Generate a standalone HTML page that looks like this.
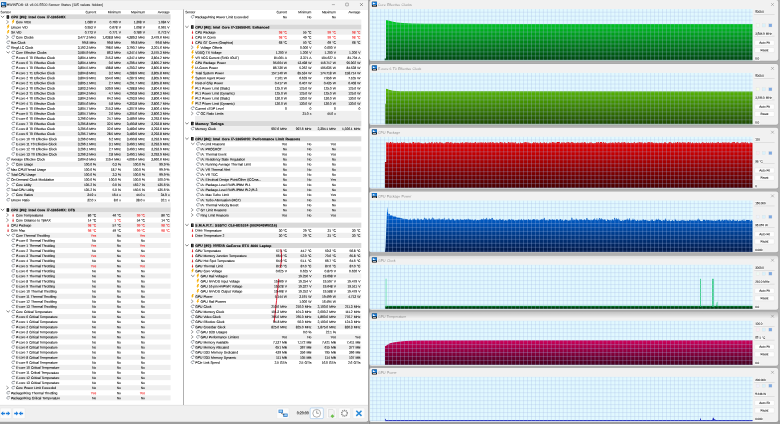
<!DOCTYPE html>
<html><head><meta charset="utf-8"><title>HWiNFO64 Sensor Status</title>
<style>html,body{margin:0;padding:0}
body{width:780px;height:424px;overflow:hidden;background:#b0b0b0;position:relative}
#bg{position:absolute;left:0;top:0}
#tx{position:absolute;left:0;top:0;width:780px;height:424px;will-change:transform;font-family:"Liberation Sans",sans-serif;font-size:3.4px;letter-spacing:-.115px;word-spacing:.3px;line-height:4px;color:#000;-webkit-text-stroke:.07px}
#tx p,#tx span,#tx b{position:absolute;margin:0;white-space:pre;height:4px;transform-origin:0 0}
#tx b{font-weight:bold;letter-spacing:.085px;-webkit-text-stroke:.13px}
#tx span{text-align:right;width:26px}
#tx .d{color:#f01414}
#tx .hd{color:#1a1a1a}
#tx .tt{font-size:3.5px;letter-spacing:0;color:#3c3c3c}
#tx .wt{font-size:3.48px;letter-spacing:0;color:#8c8c8c;-webkit-text-stroke:0}
#tx .gl{font-size:3.05px;letter-spacing:-.1px;color:#1e1e1e;background:#fcfcfc;padding:0 .3px;margin-left:-.3px}
#tx .bt{font-size:3.2px;letter-spacing:-.1px;color:#1e1e1e;width:19.6px;text-align:center}
#tx .tm{font-size:3.8px;letter-spacing:-.1px;color:#1e1e1e}
</style></head>
<body>
<svg id="bg" width="780" height="424" viewBox="0 0 780 424"><defs>
<linearGradient id="f0" gradientUnits="userSpaceOnUse" x1="0" y1="20" x2="0" y2="60.5"><stop offset="0" stop-color="#00d123"/><stop offset="1" stop-color="#00460e"/></linearGradient>
<linearGradient id="f1" gradientUnits="userSpaceOnUse" x1="0" y1="88" x2="0" y2="124.9"><stop offset="0" stop-color="#5abf00"/><stop offset="1" stop-color="#1e4700"/></linearGradient>
<linearGradient id="f2" gradientUnits="userSpaceOnUse" x1="0" y1="142" x2="0" y2="188.5"><stop offset="0" stop-color="#ed0000"/><stop offset="1" stop-color="#440000"/></linearGradient>
<linearGradient id="f3" gradientUnits="userSpaceOnUse" x1="0" y1="204" x2="0" y2="252.2"><stop offset="0" stop-color="#007aff"/><stop offset="1" stop-color="#001644"/></linearGradient>
<linearGradient id="f4" gradientUnits="userSpaceOnUse" x1="0" y1="305.8" x2="0" y2="309"><stop offset="0" stop-color="#009a46"/><stop offset=".45" stop-color="#003c08"/><stop offset="1" stop-color="#003408"/></linearGradient>
<linearGradient id="f5" gradientUnits="userSpaceOnUse" x1="0" y1="340" x2="0" y2="365.1"><stop offset="0" stop-color="#d2005a"/><stop offset="1" stop-color="#42001c"/></linearGradient>
<pattern id="gr0" x="372.2" y="59.35" width="3.97" height="3.97" patternUnits="userSpaceOnUse"><path d="M.2,0V3.97M0,.2H3.97" stroke="#a2b9e6" stroke-width=".4" fill="none"/></pattern><pattern id="gr1" x="372.2" y="123.25" width="3.97" height="3.97" patternUnits="userSpaceOnUse"><path d="M.2,0V3.97M0,.2H3.97" stroke="#a2b9e6" stroke-width=".4" fill="none"/></pattern><pattern id="gr2" x="372.2" y="187.05" width="3.97" height="3.97" patternUnits="userSpaceOnUse"><path d="M.2,0V3.97M0,.2H3.97" stroke="#a2b9e6" stroke-width=".4" fill="none"/></pattern><pattern id="gr3" x="372.2" y="250.75" width="3.97" height="3.97" patternUnits="userSpaceOnUse"><path d="M.2,0V3.97M0,.2H3.97" stroke="#a2b9e6" stroke-width=".4" fill="none"/></pattern><pattern id="gr4" x="372.2" y="307.9" width="3.97" height="3.97" patternUnits="userSpaceOnUse"><path d="M.2,0V3.97M0,.2H3.97" stroke="#a2b9e6" stroke-width=".4" fill="none"/></pattern><pattern id="gr5" x="372.2" y="363.9" width="3.97" height="3.97" patternUnits="userSpaceOnUse"><path d="M.2,0V3.97M0,.2H3.97" stroke="#a2b9e6" stroke-width=".4" fill="none"/></pattern><pattern id="gr6" x="372.2" y="420" width="3.97" height="3.97" patternUnits="userSpaceOnUse"><path d="M.2,0V3.97M0,.2H3.97" stroke="#a2b9e6" stroke-width=".4" fill="none"/></pattern>
<linearGradient id="gp" x1="0" y1="0" x2="1" y2="0"><stop offset="0" stop-color="#b4b4b4"/><stop offset=".5" stop-color="#858585"/><stop offset="1" stop-color="#8e8e8e"/></linearGradient><linearGradient id="sh" x1="0" y1="0" x2="0" y2="1"><stop offset="0" stop-color="#000" stop-opacity=".2"/><stop offset="1" stop-color="#000" stop-opacity="0"/></linearGradient><clipPath id="cp"><rect x="370" y="9" width="382.7" height="51.55"/><rect x="370" y="72.9" width="382.7" height="51.55"/><rect x="370" y="136.7" width="382.7" height="51.55"/><rect x="370" y="200.4" width="382.7" height="51.55"/><rect x="370" y="264.7" width="382.7" height="44.4"/><rect x="370" y="320.7" width="382.7" height="44.4"/><rect x="370" y="376.8" width="382.7" height="44.4"/></clipPath>
<symbol id="ib" overflow="visible"><path d="M1.35,0H2.7L1.75,1.7H2.7L.4,4.4L1.05,2.45H0Z" fill="#f6ad00"/></symbol>
<symbol id="ic" overflow="visible"><path d="M2.34,.65A1.3,1.3 0 1 0 2.68,2.2" fill="none" stroke="#56606c" stroke-width=".55"/><path d="M2.1,.2H3.05V1.15" fill="none" stroke="#2a2a2a" stroke-width=".45"/></symbol>
<symbol id="it" overflow="visible"><path d="M.8,0h.6l.35,2.3a.68,.68 0 1 1 -1.3,0z" fill="url(#tg)"/></symbol><linearGradient id="tg" x1="0" y1="0" x2="0" y2="1"><stop offset="0" stop-color="#f39a9a"/><stop offset=".6" stop-color="#e3262c"/><stop offset="1" stop-color="#dd141c"/></linearGradient>
<symbol id="ih" overflow="visible"><rect x="0" y="0" width="2.6" height="3.5" rx=".3" fill="#111"/><rect x=".9" y=".4" width=".8" height="2.7" fill="#555"/></symbol>
<symbol id="xo" overflow="visible"><path d="M0,0L1.65,1.55L3.3,0" fill="none" stroke="#383838" stroke-width=".62"/></symbol>
<symbol id="xc" overflow="visible"><path d="M0,0L2.1,1.65L0,3.3" fill="none" stroke="#5a5a5a" stroke-width=".6"/></symbol>
<symbol id="wi" overflow="visible"><rect x="0" y="0" width="5.1" height="5" rx=".4" fill="#111"/><rect x="0" y="0" width="5.1" height="3.2" rx=".4" fill="#1878d0"/><path d="M1,.8H1.7V1.3L3.9,1.9L1.7,2.5H1Z" fill="#fff"/><rect x=".9" y="3.7" width="3.3" height=".8" fill="#ddd"/></symbol>
</defs>
<rect x="0" y="420.5" width="780" height="3.5" fill="#9e9e9e"/>
<path d="M0,0.4H368.2V419.4Q368.2,421.4 366.2,421.4H0Z" fill="#fff"/>
<rect x="0" y="0.4" width="368.2" height="8.8" fill="#f2f2f2"/>
<rect x="0" y="9.05" width="368.2" height="0.4" fill="#dedede"/>
<path d="M0,405.1H368.2V419.4Q368.2,421.4 366.2,421.4H0Z" fill="#f0f0f0"/>
<rect x="0" y="404.9" width="368.2" height="0.45" fill="#d2d2d2"/>
<rect x="183.1" y="9.4" width="0.7" height="395.6" fill="#8f8f8f"/>
<rect x="10.5" y="14.36" width="160.1" height="5.08" fill="#d9d9d9"/>
<use href="#xo" x="0.9" y="15.9"/>
<use href="#ih" x="6.6" y="15.15"/>
<rect x="15.6" y="19.44" width="155" height="5.08" fill="#efefef"/>
<use href="#xc" x="6.4" y="20.33"/>
<use href="#ib" x="11.75" y="19.78"/>
<use href="#ib" x="6.75" y="24.86"/>
<rect x="10.6" y="29.6" width="160" height="5.08" fill="#efefef"/>
<use href="#ib" x="6.75" y="29.94"/>
<use href="#xc" x="6.4" y="35.57"/>
<use href="#ic" x="11.6" y="35.57"/>
<rect x="10.6" y="39.76" width="160" height="5.08" fill="#efefef"/>
<use href="#ic" x="6.6" y="40.65"/>
<use href="#ic" x="6.6" y="45.73"/>
<rect x="15.6" y="49.92" width="155" height="5.08" fill="#efefef"/>
<use href="#xo" x="6.5" y="51.56"/>
<use href="#ic" x="11.6" y="50.81"/>
<use href="#ic" x="11.6" y="55.89"/>
<rect x="15.6" y="60.08" width="155" height="5.08" fill="#efefef"/>
<use href="#ic" x="11.6" y="60.97"/>
<use href="#ic" x="11.6" y="66.05"/>
<rect x="15.6" y="70.24" width="155" height="5.08" fill="#efefef"/>
<use href="#ic" x="11.6" y="71.13"/>
<use href="#ic" x="11.6" y="76.21"/>
<rect x="15.6" y="80.4" width="155" height="5.08" fill="#efefef"/>
<use href="#ic" x="11.6" y="81.29"/>
<use href="#ic" x="11.6" y="86.37"/>
<rect x="15.6" y="90.56" width="155" height="5.08" fill="#efefef"/>
<use href="#ic" x="11.6" y="91.45"/>
<use href="#ic" x="11.6" y="96.53"/>
<rect x="15.6" y="100.72" width="155" height="5.08" fill="#efefef"/>
<use href="#ic" x="11.6" y="101.61"/>
<use href="#ic" x="11.6" y="106.69"/>
<rect x="15.6" y="110.88" width="155" height="5.08" fill="#efefef"/>
<use href="#ic" x="11.6" y="111.77"/>
<use href="#ic" x="11.6" y="116.85"/>
<rect x="15.6" y="121.04" width="155" height="5.08" fill="#efefef"/>
<use href="#ic" x="11.6" y="121.93"/>
<use href="#ic" x="11.6" y="127.01"/>
<rect x="15.6" y="131.2" width="155" height="5.08" fill="#efefef"/>
<use href="#ic" x="11.6" y="132.09"/>
<use href="#ic" x="11.6" y="137.17"/>
<rect x="15.6" y="141.36" width="155" height="5.08" fill="#efefef"/>
<use href="#ic" x="11.6" y="142.25"/>
<use href="#ic" x="11.6" y="147.33"/>
<rect x="15.6" y="151.52" width="155" height="5.08" fill="#efefef"/>
<use href="#ic" x="11.6" y="152.41"/>
<use href="#ic" x="6.6" y="157.49"/>
<rect x="15.6" y="161.68" width="155" height="5.08" fill="#efefef"/>
<use href="#xc" x="6.4" y="162.57"/>
<use href="#ic" x="11.6" y="162.57"/>
<use href="#ic" x="6.6" y="167.65"/>
<rect x="10.6" y="171.84" width="160" height="5.08" fill="#efefef"/>
<use href="#ic" x="6.6" y="172.73"/>
<use href="#ic" x="6.6" y="177.81"/>
<rect x="15.6" y="182" width="155" height="5.08" fill="#efefef"/>
<use href="#xc" x="6.4" y="182.89"/>
<use href="#ic" x="11.6" y="182.89"/>
<use href="#ic" x="6.6" y="187.97"/>
<rect x="15.6" y="192.16" width="155" height="5.08" fill="#efefef"/>
<use href="#xc" x="6.4" y="193.05"/>
<use href="#ic" x="11.6" y="193.05"/>
<use href="#ic" x="6.6" y="198.13"/>
<rect x="10.6" y="202.32" width="160" height="5.08" fill="#efefef"/>
<rect x="10.5" y="207.4" width="160.1" height="5.08" fill="#d9d9d9"/>
<use href="#xo" x="0.9" y="208.94"/>
<use href="#ih" x="6.6" y="208.19"/>
<rect x="15.6" y="212.48" width="155" height="5.08" fill="#efefef"/>
<use href="#xc" x="6.4" y="213.37"/>
<use href="#it" x="12" y="213.42"/>
<use href="#xc" x="6.4" y="218.45"/>
<use href="#it" x="12" y="218.5"/>
<rect x="10.6" y="222.64" width="160" height="5.08" fill="#efefef"/>
<use href="#it" x="7" y="223.58"/>
<use href="#it" x="7" y="228.66"/>
<rect x="15.6" y="232.8" width="155" height="5.08" fill="#efefef"/>
<use href="#xo" x="6.5" y="234.44"/>
<use href="#ic" x="11.6" y="233.69"/>
<use href="#ic" x="11.6" y="238.77"/>
<rect x="15.6" y="242.96" width="155" height="5.08" fill="#efefef"/>
<use href="#ic" x="11.6" y="243.85"/>
<use href="#ic" x="11.6" y="248.93"/>
<rect x="15.6" y="253.12" width="155" height="5.08" fill="#efefef"/>
<use href="#ic" x="11.6" y="254.01"/>
<use href="#ic" x="11.6" y="259.09"/>
<rect x="15.6" y="263.28" width="155" height="5.08" fill="#efefef"/>
<use href="#ic" x="11.6" y="264.17"/>
<use href="#ic" x="11.6" y="269.25"/>
<rect x="15.6" y="273.44" width="155" height="5.08" fill="#efefef"/>
<use href="#ic" x="11.6" y="274.33"/>
<use href="#ic" x="11.6" y="279.41"/>
<rect x="15.6" y="283.6" width="155" height="5.08" fill="#efefef"/>
<use href="#ic" x="11.6" y="284.49"/>
<use href="#ic" x="11.6" y="289.57"/>
<rect x="15.6" y="293.76" width="155" height="5.08" fill="#efefef"/>
<use href="#ic" x="11.6" y="294.65"/>
<use href="#ic" x="11.6" y="299.73"/>
<rect x="15.6" y="303.92" width="155" height="5.08" fill="#efefef"/>
<use href="#ic" x="11.6" y="304.81"/>
<use href="#xo" x="6.5" y="310.64"/>
<use href="#ic" x="11.6" y="309.89"/>
<rect x="15.6" y="314.08" width="155" height="5.08" fill="#efefef"/>
<use href="#ic" x="11.6" y="314.97"/>
<use href="#ic" x="11.6" y="320.05"/>
<rect x="15.6" y="324.24" width="155" height="5.08" fill="#efefef"/>
<use href="#ic" x="11.6" y="325.13"/>
<use href="#ic" x="11.6" y="330.21"/>
<rect x="15.6" y="334.4" width="155" height="5.08" fill="#efefef"/>
<use href="#ic" x="11.6" y="335.29"/>
<use href="#ic" x="11.6" y="340.37"/>
<rect x="15.6" y="344.56" width="155" height="5.08" fill="#efefef"/>
<use href="#ic" x="11.6" y="345.45"/>
<use href="#ic" x="11.6" y="350.53"/>
<rect x="15.6" y="354.72" width="155" height="5.08" fill="#efefef"/>
<use href="#ic" x="11.6" y="355.61"/>
<use href="#ic" x="11.6" y="360.69"/>
<rect x="15.6" y="364.88" width="155" height="5.08" fill="#efefef"/>
<use href="#ic" x="11.6" y="365.77"/>
<use href="#ic" x="11.6" y="370.85"/>
<rect x="15.6" y="375.04" width="155" height="5.08" fill="#efefef"/>
<use href="#ic" x="11.6" y="375.93"/>
<use href="#ic" x="11.6" y="381.01"/>
<rect x="15.6" y="385.2" width="155" height="5.08" fill="#efefef"/>
<use href="#xc" x="6.4" y="386.09"/>
<use href="#ic" x="11.6" y="386.09"/>
<use href="#ic" x="6.6" y="391.17"/>
<rect x="10.6" y="395.36" width="160" height="5.08" fill="#efefef"/>
<use href="#ic" x="6.6" y="396.25"/>
<use href="#ic" x="191" y="15.25"/>
<rect x="195" y="19.44" width="166.3" height="5.08" fill="#efefef"/>
<rect x="194.9" y="24.52" width="166.4" height="5.08" fill="#d9d9d9"/>
<use href="#xo" x="185.3" y="26.06"/>
<use href="#ih" x="191" y="25.31"/>
<rect x="195" y="29.6" width="166.3" height="5.08" fill="#efefef"/>
<use href="#it" x="191.4" y="30.54"/>
<use href="#it" x="191.4" y="35.62"/>
<rect x="195" y="39.76" width="166.3" height="5.08" fill="#efefef"/>
<use href="#it" x="191.4" y="40.7"/>
<use href="#xc" x="191.1" y="45.73"/>
<use href="#ib" x="196.45" y="45.18"/>
<rect x="195" y="49.92" width="166.3" height="5.08" fill="#efefef"/>
<use href="#ib" x="191.15" y="50.26"/>
<use href="#ib" x="191.15" y="55.34"/>
<rect x="195" y="60.08" width="166.3" height="5.08" fill="#efefef"/>
<use href="#ib" x="191.15" y="60.42"/>
<use href="#ib" x="191.15" y="65.5"/>
<rect x="195" y="70.24" width="166.3" height="5.08" fill="#efefef"/>
<use href="#ib" x="191.15" y="70.58"/>
<use href="#ib" x="191.15" y="75.66"/>
<rect x="195" y="80.4" width="166.3" height="5.08" fill="#efefef"/>
<use href="#ib" x="191.15" y="80.74"/>
<use href="#ib" x="191.15" y="85.82"/>
<rect x="195" y="90.56" width="166.3" height="5.08" fill="#efefef"/>
<use href="#ib" x="191.15" y="90.9"/>
<use href="#ib" x="191.15" y="95.98"/>
<rect x="195" y="100.72" width="166.3" height="5.08" fill="#efefef"/>
<use href="#ib" x="191.15" y="101.06"/>
<use href="#ic" x="191" y="106.69"/>
<rect x="200.3" y="110.88" width="161" height="5.08" fill="#efefef"/>
<use href="#xc" x="191.1" y="111.77"/>
<use href="#ic" x="196.3" y="111.77"/>
<rect x="195" y="115.96" width="166.3" height="5.08" fill="#efefef"/>
<rect x="194.9" y="121.04" width="166.4" height="5.08" fill="#d9d9d9"/>
<use href="#xo" x="185.3" y="122.58"/>
<use href="#ih" x="191" y="121.83"/>
<rect x="195" y="126.12" width="166.3" height="5.08" fill="#efefef"/>
<use href="#ic" x="191" y="127.01"/>
<rect x="194.9" y="136.28" width="166.4" height="5.08" fill="#d9d9d9"/>
<use href="#xo" x="185.3" y="137.82"/>
<use href="#ih" x="191" y="137.07"/>
<use href="#xo" x="191.2" y="143"/>
<use href="#ic" x="196.3" y="142.25"/>
<rect x="200.3" y="146.44" width="161" height="5.08" fill="#efefef"/>
<use href="#ic" x="196.3" y="147.33"/>
<use href="#ic" x="196.3" y="152.41"/>
<rect x="200.3" y="156.6" width="161" height="5.08" fill="#efefef"/>
<use href="#ic" x="196.3" y="157.49"/>
<use href="#ic" x="196.3" y="162.57"/>
<rect x="200.3" y="166.76" width="161" height="5.08" fill="#efefef"/>
<use href="#ic" x="196.3" y="167.65"/>
<use href="#ic" x="196.3" y="172.73"/>
<rect x="200.3" y="176.92" width="161" height="5.08" fill="#efefef"/>
<use href="#ic" x="196.3" y="177.81"/>
<use href="#ic" x="196.3" y="182.89"/>
<rect x="200.3" y="187.08" width="161" height="5.08" fill="#efefef"/>
<use href="#ic" x="196.3" y="187.97"/>
<use href="#ic" x="196.3" y="193.05"/>
<rect x="200.3" y="197.24" width="161" height="5.08" fill="#efefef"/>
<use href="#ic" x="196.3" y="198.13"/>
<use href="#ic" x="196.3" y="203.21"/>
<rect x="200.3" y="207.4" width="161" height="5.08" fill="#efefef"/>
<use href="#xc" x="191.1" y="208.29"/>
<use href="#ic" x="196.3" y="208.29"/>
<rect x="200.3" y="212.48" width="161" height="5.08" fill="#efefef"/>
<use href="#xc" x="191.1" y="213.37"/>
<use href="#ic" x="196.3" y="213.37"/>
<rect x="194.9" y="222.64" width="166.4" height="5.08" fill="#d9d9d9"/>
<use href="#xo" x="185.3" y="224.18"/>
<use href="#ih" x="191" y="223.43"/>
<use href="#it" x="191.4" y="228.66"/>
<rect x="195" y="232.8" width="166.3" height="5.08" fill="#efefef"/>
<use href="#it" x="191.4" y="233.74"/>
<rect x="194.9" y="242.96" width="166.4" height="5.08" fill="#d9d9d9"/>
<use href="#xo" x="185.3" y="244.5"/>
<use href="#ih" x="191" y="243.75"/>
<use href="#it" x="191.4" y="248.98"/>
<rect x="195" y="253.12" width="166.3" height="5.08" fill="#efefef"/>
<use href="#it" x="191.4" y="254.06"/>
<use href="#it" x="191.4" y="259.14"/>
<rect x="195" y="263.28" width="166.3" height="5.08" fill="#efefef"/>
<use href="#it" x="191.4" y="264.22"/>
<use href="#ib" x="191.15" y="268.7"/>
<rect x="200.3" y="273.44" width="161" height="5.08" fill="#efefef"/>
<use href="#xo" x="191.2" y="275.08"/>
<use href="#ib" x="196.45" y="273.78"/>
<use href="#ib" x="196.45" y="278.86"/>
<rect x="200.3" y="283.6" width="161" height="5.08" fill="#efefef"/>
<use href="#ib" x="196.45" y="283.94"/>
<use href="#ib" x="196.45" y="289.02"/>
<rect x="195" y="293.76" width="166.3" height="5.08" fill="#efefef"/>
<use href="#ib" x="191.15" y="294.1"/>
<use href="#xc" x="191.1" y="299.73"/>
<use href="#ib" x="196.45" y="299.18"/>
<rect x="195" y="303.92" width="166.3" height="5.08" fill="#efefef"/>
<use href="#ic" x="191" y="304.81"/>
<use href="#ic" x="191" y="309.89"/>
<rect x="195" y="314.08" width="166.3" height="5.08" fill="#efefef"/>
<use href="#ic" x="191" y="314.97"/>
<use href="#ic" x="191" y="320.05"/>
<rect x="195" y="324.24" width="166.3" height="5.08" fill="#efefef"/>
<use href="#ic" x="191" y="325.13"/>
<use href="#xc" x="191.1" y="330.21"/>
<use href="#ic" x="196.3" y="330.21"/>
<rect x="200.3" y="334.4" width="161" height="5.08" fill="#efefef"/>
<use href="#xc" x="191.1" y="335.29"/>
<use href="#ic" x="196.3" y="335.29"/>
<use href="#ic" x="191" y="340.37"/>
<rect x="195" y="344.56" width="166.3" height="5.08" fill="#efefef"/>
<use href="#ic" x="191" y="345.45"/>
<use href="#ic" x="191" y="350.53"/>
<rect x="195" y="354.72" width="166.3" height="5.08" fill="#efefef"/>
<use href="#ic" x="191" y="355.61"/>
<use href="#ic" x="191" y="360.69"/>
<use href="#wi" x="1.1" y="2.2"/>
<path d="M331.9,4.6h3" stroke="#555" stroke-width=".4"/>
<rect x="345.6" y="3.1" width="2.8" height="2.8" rx=".4" fill="none" stroke="#555" stroke-width=".4"/>
<path d="M360,3.1l2.9,2.9m0,-2.9l-2.9,2.9" stroke="#333" stroke-width=".42"/>
<rect x="0.2" y="408" width="11.1" height="10.6" rx="1" fill="#fbfbfb" stroke="#e2e2e2" stroke-width=".35"/>
<rect x="12.8" y="408" width="12.2" height="10.6" rx="1" fill="#fbfbfb" stroke="#e2e2e2" stroke-width=".35"/>
<rect x="276.8" y="408" width="12.2" height="10.6" rx="1" fill="#fbfbfb" stroke="#e2e2e2" stroke-width=".35"/>
<rect x="310.2" y="408" width="13.1" height="10.6" rx="1" fill="#fff" stroke="#5b9fe4" stroke-width=".35"/>
<rect x="326.4" y="408" width="9.9" height="10.6" rx="1" fill="#fbfbfb" stroke="#e2e2e2" stroke-width=".35"/>
<rect x="338.7" y="408" width="11.7" height="10.6" rx="1" fill="#fbfbfb" stroke="#e2e2e2" stroke-width=".35"/>
<rect x="352.9" y="408" width="11.9" height="10.6" rx="1" fill="#fbfbfb" stroke="#e2e2e2" stroke-width=".35"/>
<path d="M5.1,412.65h-1.9v-1.4l-2.4,2.15l2.4,2.15v-1.4h1.9z" fill="#1f7edb"/>
<path d="M5.9,412.65h1.9v-1.4l2.4,2.15l-2.4,2.15v-1.4h-1.9z" fill="#1f7edb"/>
<path d="M14.2,412.65h1.9v-1.4l2.4,2.15l-2.4,2.15v-1.4h-1.9z" fill="#1f7edb"/>
<path d="M23.1,412.65h-1.9v-1.4l-2.4,2.15l2.4,2.15v-1.4h1.9z" fill="#1f7edb"/>
<path d="M278.6,409.7h4.4v3.2h-4.4z" fill="#2a78c8"/><path d="M283.2,413.6h4.4v3.2h-4.4z" fill="#2a78c8"/><path d="M279.3,410.3h3v1.9h-3zM283.9,414.2h3v1.9h-3z" fill="#9fd0f5"/><path d="M281,413.2l3.6,1.6" stroke="#1b1b1b" stroke-width=".5"/>
<circle cx="316.7" cy="413.3" r="3.9" fill="#fff" stroke="#555" stroke-width=".45"/><path d="M316.7,410.6v2.7h2.1" stroke="#333" stroke-width=".45" fill="none"/>
<path d="M328.6,409.4h4.2l1.4,1.4v6.3h-5.6z" fill="#f4f4f4" stroke="#b5b5b5" stroke-width=".35"/><path d="M332.4,414.3l1.9,1.9l-1.9,1.9l-1.9,-1.9z" fill="#6cc04a"/>
<circle cx="344.5" cy="413.3" r="2.9" fill="none" stroke="#8a8a8a" stroke-width="1.3" stroke-dasharray="1.1 .72"/><circle cx="344.5" cy="413.3" r="2.3" fill="#fff" stroke="#8a8a8a" stroke-width=".5"/>
<path d="M356.3,410.7l5.2,5.2m0,-5.2l-5.2,5.2" stroke="#2a8ad8" stroke-width="1.5" stroke-linecap="butt"/>
<rect x="368.2" y="0" width="1.7" height="424" fill="url(#gp)"/>
<rect x="368.9" y="-0.3" width="409.8" height="61.9" rx="2.4" fill="#9a9a9a" opacity=".55"/>
<rect x="369.4" y="0.1" width="408.8" height="60.7" rx="2" fill="#f1f1f1"/>
<rect x="370" y="9" width="382.7" height="51.55" fill="#e1f8fe"/>
<use href="#wi" x="371.9" y="1.7"/>
<path d="M771.1,3.1l2.8,2.8m0,-2.8l-2.8,2.8" stroke="#777" stroke-width=".42"/>
<rect x="754.2" y="14.4" width="20.4" height="0.35" fill="#bcbcbc"/>
<rect x="756.1" y="23.8" width="3.2" height="3.2" fill="#f3fbf1" stroke="#dadada" stroke-width=".25"/>
<rect x="762.2" y="23.8" width="3.2" height="3.2" fill="#d9f1fb" stroke="#dadada" stroke-width=".25"/>
<rect x="768.8" y="23.8" width="3.2" height="3.2" fill="#7ea9e2" stroke="#dadada" stroke-width=".25"/>
<rect x="754.2" y="35.9" width="20.4" height="0.35" fill="#bcbcbc"/>
<rect x="754.7" y="40.3" width="19.6" height="5" rx=".8" fill="#fdfdfd" stroke="#d8d8d8" stroke-width=".35"/>
<rect x="754.7" y="47.6" width="19.6" height="5" rx=".8" fill="#fdfdfd" stroke="#d8d8d8" stroke-width=".35"/>
<rect x="368.9" y="63.6" width="409.8" height="61.9" rx="2.4" fill="#9a9a9a" opacity=".55"/>
<rect x="369.4" y="64" width="408.8" height="60.7" rx="2" fill="#f1f1f1"/>
<rect x="370" y="72.9" width="382.7" height="51.55" fill="#e1f8fe"/>
<use href="#wi" x="371.9" y="65.6"/>
<path d="M771.1,67l2.8,2.8m0,-2.8l-2.8,2.8" stroke="#777" stroke-width=".42"/>
<rect x="754.2" y="78.3" width="20.4" height="0.35" fill="#bcbcbc"/>
<rect x="756.1" y="87.7" width="3.2" height="3.2" fill="#f7fbe6" stroke="#dadada" stroke-width=".25"/>
<rect x="762.2" y="87.7" width="3.2" height="3.2" fill="#d9f1fb" stroke="#dadada" stroke-width=".25"/>
<rect x="768.8" y="87.7" width="3.2" height="3.2" fill="#7ea9e2" stroke="#dadada" stroke-width=".25"/>
<rect x="754.2" y="99.8" width="20.4" height="0.35" fill="#bcbcbc"/>
<rect x="754.7" y="104.2" width="19.6" height="5" rx=".8" fill="#fdfdfd" stroke="#d8d8d8" stroke-width=".35"/>
<rect x="754.7" y="111.5" width="19.6" height="5" rx=".8" fill="#fdfdfd" stroke="#d8d8d8" stroke-width=".35"/>
<rect x="368.9" y="127.4" width="409.8" height="61.9" rx="2.4" fill="#9a9a9a" opacity=".55"/>
<rect x="369.4" y="127.8" width="408.8" height="60.7" rx="2" fill="#f1f1f1"/>
<rect x="370" y="136.7" width="382.7" height="51.55" fill="#e1f8fe"/>
<use href="#wi" x="371.9" y="129.4"/>
<path d="M771.1,130.8l2.8,2.8m0,-2.8l-2.8,2.8" stroke="#777" stroke-width=".42"/>
<rect x="754.2" y="142.1" width="20.4" height="0.35" fill="#bcbcbc"/>
<rect x="756.1" y="151.5" width="3.2" height="3.2" fill="#fbe9ee" stroke="#dadada" stroke-width=".25"/>
<rect x="762.2" y="151.5" width="3.2" height="3.2" fill="#d9f1fb" stroke="#dadada" stroke-width=".25"/>
<rect x="768.8" y="151.5" width="3.2" height="3.2" fill="#7ea9e2" stroke="#dadada" stroke-width=".25"/>
<rect x="754.2" y="163.6" width="20.4" height="0.35" fill="#bcbcbc"/>
<rect x="754.7" y="168" width="19.6" height="5" rx=".8" fill="#fdfdfd" stroke="#d8d8d8" stroke-width=".35"/>
<rect x="754.7" y="175.3" width="19.6" height="5" rx=".8" fill="#fdfdfd" stroke="#d8d8d8" stroke-width=".35"/>
<rect x="368.9" y="191.1" width="409.8" height="61.9" rx="2.4" fill="#9a9a9a" opacity=".55"/>
<rect x="369.4" y="191.5" width="408.8" height="60.7" rx="2" fill="#f1f1f1"/>
<rect x="370" y="200.4" width="382.7" height="51.55" fill="#e1f8fe"/>
<use href="#wi" x="371.9" y="193.1"/>
<path d="M771.1,194.5l2.8,2.8m0,-2.8l-2.8,2.8" stroke="#777" stroke-width=".42"/>
<rect x="754.2" y="205.8" width="20.4" height="0.35" fill="#bcbcbc"/>
<rect x="756.1" y="215.2" width="3.2" height="3.2" fill="#eef3fb" stroke="#dadada" stroke-width=".25"/>
<rect x="762.2" y="215.2" width="3.2" height="3.2" fill="#d9f1fb" stroke="#dadada" stroke-width=".25"/>
<rect x="768.8" y="215.2" width="3.2" height="3.2" fill="#7ea9e2" stroke="#dadada" stroke-width=".25"/>
<rect x="754.2" y="227.3" width="20.4" height="0.35" fill="#bcbcbc"/>
<rect x="754.7" y="231.7" width="19.6" height="5" rx=".8" fill="#fdfdfd" stroke="#d8d8d8" stroke-width=".35"/>
<rect x="754.7" y="239" width="19.6" height="5" rx=".8" fill="#fdfdfd" stroke="#d8d8d8" stroke-width=".35"/>
<rect x="368.9" y="255.4" width="409.8" height="55.2" rx="2.4" fill="#9a9a9a" opacity=".55"/>
<rect x="369.4" y="255.8" width="408.8" height="54" rx="2" fill="#f1f1f1"/>
<rect x="369.4" y="255.8" width="408.8" height="4" rx="2" fill="url(#sh)" opacity=".45"/>
<rect x="370" y="264.7" width="382.7" height="44.4" fill="#e1f8fe"/>
<use href="#wi" x="371.9" y="257.4"/>
<path d="M771.1,258.8l2.8,2.8m0,-2.8l-2.8,2.8" stroke="#777" stroke-width=".42"/>
<rect x="754.2" y="270.4" width="20.4" height="0.35" fill="#bcbcbc"/>
<rect x="756.1" y="272" width="3.2" height="3.2" fill="#effaf4" stroke="#dadada" stroke-width=".25"/>
<rect x="762.2" y="272" width="3.2" height="3.2" fill="#d9f1fb" stroke="#dadada" stroke-width=".25"/>
<rect x="768.8" y="272" width="3.2" height="3.2" fill="#7ea9e2" stroke="#dadada" stroke-width=".25"/>
<rect x="754.2" y="283.9" width="20.4" height="0.35" fill="#bcbcbc"/>
<rect x="754.7" y="288.3" width="19.6" height="5" rx=".8" fill="#fdfdfd" stroke="#d8d8d8" stroke-width=".35"/>
<rect x="754.7" y="295.8" width="19.6" height="5" rx=".8" fill="#fdfdfd" stroke="#d8d8d8" stroke-width=".35"/>
<rect x="368.9" y="311.4" width="409.8" height="55.2" rx="2.4" fill="#9a9a9a" opacity=".55"/>
<rect x="369.4" y="311.8" width="408.8" height="54" rx="2" fill="#f1f1f1"/>
<rect x="369.4" y="311.8" width="408.8" height="6.5" rx="2" fill="url(#sh)"/>
<rect x="370" y="320.7" width="382.7" height="44.4" fill="#e1f8fe"/>
<use href="#wi" x="371.9" y="313.4"/>
<path d="M771.1,314.8l2.8,2.8m0,-2.8l-2.8,2.8" stroke="#777" stroke-width=".42"/>
<rect x="754.2" y="326.4" width="20.4" height="0.35" fill="#bcbcbc"/>
<rect x="756.1" y="328" width="3.2" height="3.2" fill="#fbeaf2" stroke="#dadada" stroke-width=".25"/>
<rect x="762.2" y="328" width="3.2" height="3.2" fill="#d9f1fb" stroke="#dadada" stroke-width=".25"/>
<rect x="768.8" y="328" width="3.2" height="3.2" fill="#7ea9e2" stroke="#dadada" stroke-width=".25"/>
<rect x="754.2" y="339.9" width="20.4" height="0.35" fill="#bcbcbc"/>
<rect x="754.7" y="344.3" width="19.6" height="5" rx=".8" fill="#fdfdfd" stroke="#d8d8d8" stroke-width=".35"/>
<rect x="754.7" y="351.8" width="19.6" height="5" rx=".8" fill="#fdfdfd" stroke="#d8d8d8" stroke-width=".35"/>
<rect x="368.9" y="367.5" width="409.8" height="55.2" rx="2.4" fill="#9a9a9a" opacity=".55"/>
<rect x="369.4" y="367.9" width="408.8" height="54" rx="2" fill="#f1f1f1"/>
<rect x="370" y="376.8" width="382.7" height="44.4" fill="#e1f8fe"/>
<use href="#wi" x="371.9" y="369.5"/>
<path d="M771.1,370.9l2.8,2.8m0,-2.8l-2.8,2.8" stroke="#777" stroke-width=".42"/>
<rect x="754.2" y="382.5" width="20.4" height="0.35" fill="#bcbcbc"/>
<rect x="756.1" y="384.1" width="3.2" height="3.2" fill="#f0f0fb" stroke="#dadada" stroke-width=".25"/>
<rect x="762.2" y="384.1" width="3.2" height="3.2" fill="#d9f1fb" stroke="#dadada" stroke-width=".25"/>
<rect x="768.8" y="384.1" width="3.2" height="3.2" fill="#7ea9e2" stroke="#dadada" stroke-width=".25"/>
<rect x="754.2" y="396" width="20.4" height="0.35" fill="#bcbcbc"/>
<rect x="754.7" y="400.4" width="19.6" height="5" rx=".8" fill="#fdfdfd" stroke="#d8d8d8" stroke-width=".35"/>
<rect x="754.7" y="407.9" width="19.6" height="5" rx=".8" fill="#fdfdfd" stroke="#d8d8d8" stroke-width=".35"/>
<g clip-path="url(#cp)">
<path d="M384.6,60.55L384.6,58.6L386,58.6L386,20.2L386.8,19.9L388.5,20.6L392,21.6L397,22.4L403,23L412,23.5L425,23.8L752.7,24.1L752.7,60.55Z" fill="url(#f0)"/>
<path d="M385.3,124.45L385.3,103.7L386,103.7L386,89L386.8,88.8L389,89.8L393,90.7L400,91.3L752.7,91.4L752.7,124.45Z" fill="url(#f1)"/>
<path d="M384.9,188.25L384.9,162L386.2,162L386.2,142.8L386.8,142.28L387.5,142.77L388.2,142.49L388.9,142.87L389.6,142.9L390.3,142L391,141.92L391.7,143.24L392.4,142.31L393.1,142.27L393.8,143.49L394.5,142.65L395.2,143.24L395.9,142.66L396.6,142.92L397.3,142.14L398,142.92L398.7,143.29L399.4,142.74L400.1,143.09L400.8,142.97L401.5,142L402.2,143.11L402.9,142.85L403.6,142.38L404.3,141.95L405,143.28L405.7,142.66L406.4,143.05L407.1,143.31L407.8,143.04L408.5,143.37L409.2,142.53L409.9,143.18L410.6,142.61L411.3,143.4L412,143.31L412.7,142.06L413.4,142.12L414.1,142.25L414.8,143.44L415.5,142.6L416.2,142.9L416.9,142.38L417.6,142.71L418.3,142.52L419,142.46L419.7,142.84L420.4,142.83L421.1,143.35L421.8,142.99L422.5,143.39L423.2,143.27L423.9,143.49L424.6,142.97L425.3,142.16L426,143.28L426.7,143.44L427.4,143.35L428.1,142.81L428.8,143.04L429.5,142.24L430.2,143.23L430.9,142.82L431.6,142.36L432.3,142L433,143.27L433.7,143.48L434.4,142.04L435.1,143.18L435.8,142.56L436.5,142.14L437.2,142.37L437.9,143.13L438.6,143.3L439.3,141.97L440,142.88L440.7,141.97L441.4,143.05L442.1,142.43L442.8,143.31L443.5,143.47L444.2,142.71L444.9,143.5L445.6,142.4L446.3,142.02L447,142.86L447.7,141.95L448.4,142.22L449.1,142.55L449.8,142.88L450.5,142.15L451.2,141.97L451.9,143.29L452.6,142.4L453.3,143.43L454,143.33L454.7,142.5L455.4,142.64L456.1,142.73L456.8,142.93L457.5,142.85L458.2,142.79L458.9,142.89L459.6,143.4L460.3,142.71L461,142.59L461.7,143.05L462.4,142.28L463.1,142.38L463.8,143.46L464.5,142.73L465.2,142.78L465.9,141.92L466.6,142.56L467.3,142.83L468,141.93L468.7,142.89L469.4,142.91L470.1,142L470.8,142.9L471.5,142.65L472.2,142.99L472.9,142.46L473.6,143.03L474.3,143.08L475,141.94L475.7,142L476.4,142.98L477.1,143.44L477.8,142.3L478.5,142.63L479.2,142.85L479.9,142.41L480.6,142.48L481.3,142.4L482,142.49L482.7,142.85L483.4,142.38L484.1,142.5L484.8,143.14L485.5,141.94L486.2,142.81L486.9,143.08L487.6,142.4L488.3,142.26L489,143.19L489.7,142.28L490.4,142.2L491.1,142.6L491.8,143.02L492.5,142.06L493.2,142.42L493.9,142.43L494.6,143.23L495.3,142.6L496,143.27L496.7,142.17L497.4,142.44L498.1,142.94L498.8,143.32L499.5,142.62L500.2,142.26L500.9,142.09L501.6,142.75L502.3,142.21L503,143.19L503.7,143.24L504.4,142.19L505.1,142.35L505.8,143.19L506.5,142.93L507.2,143.19L507.9,142.45L508.6,142.11L509.3,142.37L510,143.17L510.7,142.33L511.4,142.45L512.1,142.57L512.8,142.57L513.5,142.56L514.2,143.37L514.9,142.15L515.6,141.91L516.3,143.41L517,143.31L517.7,143.48L518.4,142.59L519.1,143.42L519.8,143.38L520.5,142.26L521.2,143.09L521.9,143.24L522.6,142.96L523.3,142.73L524,142.36L524.7,142.45L525.4,142.26L526.1,142.01L526.8,142.84L527.5,142.36L528.2,143.2L528.9,141.97L529.6,143.35L530.3,143.01L531,143.38L531.7,143.33L532.4,143.34L533.1,142.82L533.8,141.92L534.5,143.09L535.2,142.17L535.9,142.38L536.6,142.96L537.3,142.74L538,142.56L538.7,143.4L539.4,142.88L540.1,142.45L540.8,142.3L541.5,143.28L542.2,142.66L542.9,143.15L543.6,142.46L544.3,142.22L545,142.76L545.7,143.21L546.4,142.17L547.1,143.17L547.8,143.37L548.5,143.19L549.2,143.22L549.9,141.91L550.6,142.91L551.3,143.28L552,141.98L552.7,142.33L553.4,142.33L554.1,142.74L554.8,142.58L555.5,142.66L556.2,143.14L556.9,141.9L557.6,141.99L558.3,142.1L559,142.1L559.7,142.01L560.4,143.46L561.1,143.27L561.8,142.04L562.5,142.7L563.2,142.41L563.9,142.4L564.6,142.46L565.3,142.94L566,142.84L566.7,142.48L567.4,142.21L568.1,142.43L568.8,142.1L569.5,142.79L570.2,143.05L570.9,142.51L571.6,142.03L572.3,142.19L573,142.5L573.7,142.87L574.4,143.15L575.1,142.51L575.8,143.18L576.5,142.9L577.2,142.59L577.9,142.5L578.6,142.69L579.3,143.02L580,142.57L580.7,143.01L581.4,142.64L582.1,142.29L582.8,142.76L583.5,143.01L584.2,142.01L584.9,142.58L585.6,142.58L586.3,143.31L587,143.4L587.7,142.5L588.4,143.34L589.1,143.17L589.8,142.32L590.5,142.64L591.2,142.1L591.9,143.2L592.6,142.96L593.3,143.32L594,143.17L594.7,142.97L595.4,143.07L596.1,142.8L596.8,142.07L597.5,142.84L598.2,141.91L598.9,142.13L599.6,143.14L600.3,141.97L601,142.05L601.7,142.06L602.4,143.31L603.1,142.19L603.8,141.94L604.5,143.25L605.2,142.09L605.9,143.25L606.6,142.98L607.3,143.24L608,143.42L608.7,142.83L609.4,143.18L610.1,141.96L610.8,143.13L611.5,142.72L612.2,143.04L612.9,142.07L613.6,143.1L614.3,143.4L615,142L615.7,142.42L616.4,142.8L617.1,143.22L617.8,142.29L618.5,142.19L619.2,142.3L619.9,142.89L620.6,143.11L621.3,142.53L622,142.49L622.7,142.53L623.4,142.46L624.1,142.57L624.8,142.03L625.5,142.7L626.2,143.46L626.9,142.56L627.6,143.1L628.3,142.16L629,143.01L629.7,143.11L630.4,142.98L631.1,142.73L631.8,142.67L632.5,142.93L633.2,143.34L633.9,142.14L634.6,142.05L635.3,143.1L636,143.37L636.7,142.73L637.4,142.61L638.1,143.05L638.8,142.2L639.5,142.33L640.2,142.22L640.9,142.84L641.6,142.4L642.3,142.27L643,143.01L643.7,143.43L644.4,142.37L645.1,143.03L645.8,142.56L646.5,143.27L647.2,142.84L647.9,142.33L648.6,142.25L649.3,141.94L650,142.67L650.7,142.51L651.4,142.18L652.1,142.48L652.8,142.42L653.5,143.14L654.2,142.13L654.9,143.49L655.6,142.67L656.3,142.86L657,142.65L657.7,143.24L658.4,143.21L659.1,142.79L659.8,142.67L660.5,143.05L661.2,143.27L661.9,142.54L662.6,143.07L663.3,143.44L664,142.65L664.7,142.27L665.4,142.28L666.1,143.05L666.8,142.98L667.5,143.43L668.2,143.27L668.9,142.29L669.6,142.2L670.3,142.31L671,142.2L671.7,143.03L672.4,143.27L673.1,143.34L673.8,142.31L674.5,143.28L675.2,142.4L675.9,142.58L676.6,143.07L677.3,142.04L678,142.05L678.7,143.23L679.4,142.37L680.1,142.47L680.8,142.83L681.5,142.98L682.2,141.91L682.9,142.44L683.6,142.6L684.3,142.68L685,142.24L685.7,142.84L686.4,143.43L687.1,142.53L687.8,142.77L688.5,142.09L689.2,142.34L689.9,142.96L690.6,142.08L691.3,143.32L692,143.35L692.7,142.06L693.4,143.41L694.1,142.5L694.8,143.14L695.5,143.11L696.2,142.37L696.9,142.98L697.6,142.95L698.3,143.19L699,142.32L699.7,143.11L700.4,143.44L701.1,142.98L701.8,142.76L702.5,142.08L703.2,142.69L703.9,142.46L704.6,143.05L705.3,142.99L706,142.81L706.7,142.19L707.4,142.93L708.1,142.91L708.8,142.19L709.5,143.32L710.2,142.95L710.9,142.1L711.6,143.39L712.3,142.13L713,142.43L713.7,143.05L714.4,142.86L715.1,142.79L715.8,142.94L716.5,142.63L717.2,142.4L717.9,142.18L718.6,142.01L719.3,143.05L720,143.11L720.7,142.77L721.4,143.08L722.1,142.47L722.8,142.33L723.5,142.51L724.2,143.3L724.9,141.97L725.6,142.71L726.3,142.3L727,143.13L727.7,142.47L728.4,142.43L729.1,142.55L729.8,142.77L730.5,143.13L731.2,142.46L731.9,143.26L732.6,142.08L733.3,142.33L734,142.06L734.7,142.08L735.4,143.15L736.1,143.06L736.8,142.2L737.5,142.2L738.2,142.57L738.9,143.09L739.6,143.21L740.3,143.1L741,142.85L741.7,142.13L742.4,142.54L743.1,142.21L743.8,142.74L744.5,142.81L745.2,142.22L745.9,142.3L746.6,143.15L747.3,141.95L748,143.19L748.7,143.33L749.4,143.42L750.1,142.51L750.8,142.78L751.5,142.83L752.2,142.91L752.7,142.7L752.7,188.25Z" fill="url(#f2)"/>
<path d="M385,251.95L385.6,246L386.4,225L387.2,206.6L387.8,212L388.6,214.5L389.4,213.6L390.4,215.6L392,215.2L393.5,216.6L395.5,216.4L397,217.6L400,217.8L403,218.8L407,219L408,219.55L408.75,219.89L409.5,219.79L410.25,218.37L411,220.2L411.75,220.12L412.5,219.26L413.25,219.41L414,218.35L414.75,218.88L415.5,219.86L416.25,219.93L417,219.57L417.75,218.34L418.5,218.76L419.25,220.31L420,218.92L420.75,219.43L421.5,218.76L422.25,219.74L423,220.14L423.75,219.08L424.5,217.15L425.25,218.97L426,218.37L426.75,219.05L427.5,220.01L428.25,219.01L429,218.29L429.75,218.83L430.5,219.88L431.25,218.42L432,219.12L432.75,216.91L433.5,218.76L434.25,218.79L435,220.26L435.75,219.09L436.5,219.46L437.25,218.63L438,220.01L438.75,218.49L439.5,218.6L440.25,219.64L441,219.1L441.75,219.52L442.5,219.06L443.25,218.59L444,219.81L444.75,217.26L445.5,220.41L446.25,219.26L447,219.64L447.75,219.36L448.5,218.56L449.25,218.52L450,220.14L450.75,219.92L451.5,219.72L452.25,218.68L453,218.77L453.75,219.06L454.5,220.47L455.25,220.43L456,219.46L456.75,219.44L457.5,219.29L458.25,219.24L459,220.41L459.75,219.49L460.5,218.68L461.25,220.06L462,219.23L462.75,220.06L463.5,219.84L464.25,219.24L465,219.08L465.75,220.06L466.5,219.11L467.25,219.82L468,218.55L468.75,219.03L469.5,219.46L470.25,219.83L471,219.23L471.75,220.02L472.5,219.24L473.25,220.29L474,220.5L474.75,219.59L475.5,218.89L476.25,220.43L477,219.94L477.75,220.02L478.5,220.13L479.25,219.9L480,219.82L480.75,219.85L481.5,218.63L482.25,219.46L483,219.02L483.75,218.35L484.5,219.53L485.25,218.7L486,219.23L486.75,217.48L487.5,219.53L488.25,219.83L489,219.08L489.75,218.61L490.5,219.17L491.25,218.84L492,217.86L492.75,218.35L493.5,219.71L494.25,219.79L495,220.27L495.75,220.26L496.5,219.37L497.25,219.83L498,220.55L498.75,219.86L499.5,218.93L500.25,218.86L501,219.88L501.75,219.91L502.5,219.41L503.25,219.11L504,220.61L504.75,220.59L505.5,219.86L506.25,220.63L507,219.5L507.75,220.64L508.5,219.25L509.25,218.93L510,219.57L510.75,220.25L511.5,218.72L512.25,219.24L513,220.26L513.75,219.23L514.5,220.68L515.25,219.92L516,220L516.75,220.2L517.5,220.23L518.25,219.78L519,219.31L519.75,219.65L520.5,220.21L521.25,218.8L522,219.64L522.75,220.51L523.5,218.76L524.25,219.59L525,220.16L525.75,219.71L526.5,219.52L527.25,220.45L528,219.35L528.75,218.89L529.5,220.15L530.25,219.33L531,220.59L531.75,219.72L532.5,219.76L533.25,219.08L534,218.9L534.75,219.24L535.5,220.36L536.25,218.83L537,220.74L537.75,218.69L538.5,220.48L539.25,220.09L540,220.22L540.75,219.39L541.5,219.1L542.25,219.63L543,218.55L543.75,219.03L544.5,217.46L545.25,219.97L546,220.58L546.75,219.69L547.5,220.03L548.25,220.71L549,218.94L549.75,219.14L550.5,219.85L551.25,219.95L552,219.37L552.75,219.35L553.5,219.88L554.25,219.32L555,220.33L555.75,220.28L556.5,219.03L557.25,219.05L558,220.05L558.75,220.62L559.5,219.52L560.25,218.93L561,218.98L561.75,220.78L562.5,219.33L563.25,220.83L564,220.53L564.75,220.14L565.5,219.36L566.25,220.12L567,219.67L567.75,220.56L568.5,220.51L569.25,220.61L570,220.1L570.75,220.39L571.5,217.61L572.25,217.82L573,220.7L573.75,218.95L574.5,219.87L575.25,220.17L576,218.36L576.75,219.25L577.5,219.69L578.25,220.7L579,219.45L579.75,219.27L580.5,219.42L581.25,219.02L582,219.69L582.75,220.33L583.5,219.91L584.25,219.2L585,219.55L585.75,220.43L586.5,217.88L587.25,217.94L588,219.78L588.75,219.71L589.5,219.92L590.25,220.45L591,219.32L591.75,220.34L592.5,220.29L593.25,219.45L594,219.12L594.75,218.32L595.5,220.1L596.25,220.05L597,217.7L597.75,220.81L598.5,219.39L599.25,218.01L600,218.32L600.75,219.54L601.5,218.14L602.25,219.11L603,219.39L603.75,219.84L604.5,219.21L605.25,219.26L606,220.89L606.75,220.76L607.5,219.09L608.25,220.03L609,219.81L609.75,220.51L610.5,219.68L611.25,220.72L612,219.3L612.75,219.25L613.5,220.71L614.25,217.84L615,218.07L615.75,219.94L616.5,218.08L617.25,218.99L618,219.49L618.75,218.34L619.5,219.94L620.25,220.61L621,220.9L621.75,220.63L622.5,219.99L623.25,220.42L624,220.57L624.75,219.65L625.5,219.89L626.25,219.25L627,219.65L627.75,218.2L628.5,220.66L629.25,217.69L630,219.4L630.75,220.86L631.5,220.37L632.25,220L633,218.31L633.75,220.32L634.5,219.11L635.25,220.22L636,220.58L636.75,221.04L637.5,219.4L638.25,221L639,220.04L639.75,220.71L640.5,220.24L641.25,220.37L642,220.81L642.75,219.29L643.5,219.25L644.25,220.15L645,219.98L645.75,219.75L646.5,220.32L647.25,220.7L648,219.91L648.75,221.17L649.5,220.91L650.25,220.02L651,220.88L651.75,219.29L652.5,219.42L653.25,221.03L654,220.82L654.75,220.6L655.5,220.48L656.25,218.49L657,220.26L657.75,219.61L658.5,218.38L659.25,219.87L660,220.2L660.75,220.05L661.5,220.89L662.25,220.64L663,220.34L663.75,219.99L664.5,220.63L665.25,218.34L666,219.45L666.75,220.44L667.5,220.71L668.25,221.14L669,219.22L669.75,220.79L670.5,221.2L671.25,220.67L672,220.77L672.75,219.72L673.5,221.09L674.25,221.25L675,218.59L675.75,220.09L676.5,220.62L677.25,221.14L678,220.09L678.75,220.7L679.5,220.75L680.25,221.1L681,219.94L681.75,220.58L682.5,219.67L683.25,220.87L684,219.47L684.75,221L685.5,220.8L686.25,220.2L687,221.16L687.75,219.92L688.5,221.29L689.25,219.42L690,220.49L690.75,219.73L691.5,220.56L692.25,220.75L693,219.5L693.75,221.05L694.5,220.02L695.25,220.67L696,219.84L696.75,221.07L697.5,219.59L698.25,218.21L699,219.7L699.75,219.61L700.5,220.88L701.25,221.01L702,221.26L702.75,220.66L703.5,219.62L704.25,219.55L705,220.17L705.75,220.78L706.5,219.59L707.25,220.52L708,219.67L708.75,220.18L709.5,220.43L710.25,219.83L711,220.96L711.75,220.04L712.5,220.41L713.25,220.93L714,220.22L714.75,220.45L715.5,221.04L716.25,220.05L717,221.16L717.75,219.57L718.5,219.95L719.25,219.62L720,219.67L720.75,221.45L721.5,220.25L722.25,219.67L723,219.61L723.75,221.02L724.5,219.53L725.25,220.41L726,219.03L726.75,219.94L727.5,220.39L728.25,219.68L729,221.42L729.75,219.03L730.5,220.3L731.25,220.39L732,221.33L732.75,219.3L733.5,219.58L734.25,220.36L735,221.18L735.75,220.29L736.5,221.05L737.25,219.84L738,220.39L738.75,221.54L739.5,220.39L740.25,220.49L741,220.89L741.75,219.9L742.5,219.71L743.25,221.36L744,218.46L744.75,221.23L745.5,220.77L746.25,220.05L747,219.95L747.75,219.95L748.5,220.12L749.25,220.33L750,219.89L750.75,221.54L751.5,219.78L752.25,220.89L752.7,220.6L752.7,251.95Z" fill="url(#f3)"/>
<rect x="385.2" y="305.8" width="367.5" height="3.4" fill="url(#f4)"/>
<rect x="385.6" y="278.7" width="0.9" height="28" fill="#6fe0b0"/>
<rect x="700.1" y="278.8" width="0.8" height="28" fill="#22c878"/>
<rect x="712.2" y="278.8" width="1.5" height="28" fill="#22c878"/>
<path d="M716.2,306.2L716.8,302.4L717.4,301.4L717.5,306.2Z" fill="#22c878"/>
<path d="M385,365.1L385,346.2L386.5,345.6L388,344.2L390,343.2L393,342.4L398,341.7L405,341L417,340.4L752.7,340.2L752.7,365.1Z" fill="url(#f5)"/>
<path d="M385.2,421.5V418.6L386.2,419.9H700L700.5,417.4L701,419.9H712.4L713,417.3L714.4,419.3L716,419.9H752.7V421.5Z" fill="#0a12b4"/>
<rect x="370" y="9" width="382.7" height="51.55" fill="url(#gr0)"/>
<rect x="370" y="72.9" width="382.7" height="51.55" fill="url(#gr1)"/>
<rect x="370" y="136.7" width="382.7" height="51.55" fill="url(#gr2)"/>
<rect x="370" y="200.4" width="382.7" height="51.55" fill="url(#gr3)"/>
<rect x="370" y="264.7" width="382.7" height="44.4" fill="url(#gr4)"/>
<rect x="370" y="320.7" width="382.7" height="44.4" fill="url(#gr5)"/>
<rect x="370" y="376.8" width="382.7" height="44.4" fill="url(#gr6)"/>
</g>
<path d="M280.8,249.6C282.2,256 281.6,262 280.2,267.6" stroke="#e2001a" stroke-width=".85" fill="none" stroke-linecap="round"/>
<path d="M278.7,279.3C277.6,293 275.6,308 274.2,321.7" stroke="#e2001a" stroke-width=".85" fill="none" stroke-linecap="round"/>
</svg>
<div id="tx">
<b style="left:10px;top:15px;transform:matrix(1,.0005,0,1,0.9,0.26)">CPU [#0]: Intel Core i7-13650HX</b>
<p style="left:15px;top:20px;transform:matrix(1,.0005,0,1,0.9,0.34)">Core VIDs</p>
<span style="left:70px;top:20px;transform:matrix(1,.0005,0,1,0,0.34)">1.080 V</span>
<span style="left:94px;top:20px;transform:matrix(1,.0005,0,1,0.8,0.34)">0.760 V</span>
<span style="left:118px;top:20px;transform:matrix(1,.0005,0,1,0.9,0.34)">1.368 V</span>
<span style="left:143px;top:20px;transform:matrix(1,.0005,0,1,0.5,0.34)">1.084 V</span>
<p style="left:10px;top:25px;transform:matrix(1,.0005,0,1,0.9,0.42)">Uncore VID</p>
<span style="left:70px;top:25px;transform:matrix(1,.0005,0,1,0,0.42)">0.953 V</span>
<span style="left:94px;top:25px;transform:matrix(1,.0005,0,1,0.8,0.42)">0.678 V</span>
<span style="left:118px;top:25px;transform:matrix(1,.0005,0,1,0.9,0.42)">1.098 V</span>
<span style="left:143px;top:25px;transform:matrix(1,.0005,0,1,0.5,0.42)">0.961 V</span>
<p style="left:10px;top:30px;transform:matrix(1,.0005,0,1,0.9,0.5)">SA VID</p>
<span style="left:70px;top:30px;transform:matrix(1,.0005,0,1,0,0.5)">0.773 V</span>
<span style="left:94px;top:30px;transform:matrix(1,.0005,0,1,0.8,0.5)">0.771 V</span>
<span style="left:118px;top:30px;transform:matrix(1,.0005,0,1,0.9,0.5)">0.786 V</span>
<span style="left:143px;top:30px;transform:matrix(1,.0005,0,1,0.5,0.5)">0.773 V</span>
<p style="left:15px;top:35px;transform:matrix(1,.0005,0,1,0.9,0.58)">Core Clocks</p>
<span style="left:70px;top:35px;transform:matrix(1,.0005,0,1,0,0.58)">3,477.3 MHz</span>
<span style="left:94px;top:35px;transform:matrix(1,.0005,0,1,0.8,0.58)">1,638.8 MHz</span>
<span style="left:118px;top:35px;transform:matrix(1,.0005,0,1,0.9,0.58)">4,389.3 MHz</span>
<span style="left:143px;top:35px;transform:matrix(1,.0005,0,1,0.5,0.58)">3,479.6 MHz</span>
<p style="left:10px;top:40px;transform:matrix(1,.0005,0,1,0.9,0.66)">Bus Clock</p>
<span style="left:70px;top:40px;transform:matrix(1,.0005,0,1,0,0.66)">99.8 MHz</span>
<span style="left:94px;top:40px;transform:matrix(1,.0005,0,1,0.8,0.66)">99.8 MHz</span>
<span style="left:118px;top:40px;transform:matrix(1,.0005,0,1,0.9,0.66)">99.8 MHz</span>
<span style="left:143px;top:40px;transform:matrix(1,.0005,0,1,0.5,0.66)">99.8 MHz</span>
<p style="left:10px;top:45px;transform:matrix(1,.0005,0,1,0.9,0.74)">Ring/LLC Clock</p>
<span style="left:70px;top:45px;transform:matrix(1,.0005,0,1,0,0.74)">3,192.3 MHz</span>
<span style="left:94px;top:45px;transform:matrix(1,.0005,0,1,0.8,0.74)">798.0 MHz</span>
<span style="left:118px;top:45px;transform:matrix(1,.0005,0,1,0.9,0.74)">3,790.7 MHz</span>
<span style="left:143px;top:45px;transform:matrix(1,.0005,0,1,0.5,0.74)">3,201.6 MHz</span>
<p style="left:15px;top:50px;transform:matrix(1,.0005,0,1,0.9,0.82)">Core Effective Clocks</p>
<span style="left:70px;top:50px;transform:matrix(1,.0005,0,1,0,0.82)">3,584.9 MHz</span>
<span style="left:94px;top:50px;transform:matrix(1,.0005,0,1,0.8,0.82)">86.3 MHz</span>
<span style="left:118px;top:50px;transform:matrix(1,.0005,0,1,0.9,0.82)">4,347.4 MHz</span>
<span style="left:143px;top:50px;transform:matrix(1,.0005,0,1,0.5,0.82)">3,575.3 MHz</span>
<p style="left:15px;top:55px;transform:matrix(1,.0005,0,1,0.9,0.9)">P-core 0 T0 Effective Clock</p>
<span style="left:70px;top:55px;transform:matrix(1,.0005,0,1,0,0.9)">3,804.4 MHz</span>
<span style="left:94px;top:55px;transform:matrix(1,.0005,0,1,0.8,0.9)">215.3 MHz</span>
<span style="left:118px;top:55px;transform:matrix(1,.0005,0,1,0.9,0.9)">4,347.4 MHz</span>
<span style="left:143px;top:55px;transform:matrix(1,.0005,0,1,0.5,0.9)">3,804.2 MHz</span>
<p style="left:15px;top:60px;transform:matrix(1,.0005,0,1,0.9,0.98)">P-core 0 T1 Effective Clock</p>
<span style="left:70px;top:60px;transform:matrix(1,.0005,0,1,0,0.98)">3,804.4 MHz</span>
<span style="left:94px;top:60px;transform:matrix(1,.0005,0,1,0.8,0.98)">0.0 MHz</span>
<span style="left:118px;top:60px;transform:matrix(1,.0005,0,1,0.9,0.98)">4,296.4 MHz</span>
<span style="left:143px;top:60px;transform:matrix(1,.0005,0,1,0.5,0.98)">3,805.2 MHz</span>
<p style="left:15px;top:66px;transform:matrix(1,.0005,0,1,0.9,0.06)">P-core 1 T0 Effective Clock</p>
<span style="left:70px;top:66px;transform:matrix(1,.0005,0,1,0,0.06)">3,804.5 MHz</span>
<span style="left:94px;top:66px;transform:matrix(1,.0005,0,1,0.8,0.06)">198.8 MHz</span>
<span style="left:118px;top:66px;transform:matrix(1,.0005,0,1,0.9,0.06)">4,293.2 MHz</span>
<span style="left:143px;top:66px;transform:matrix(1,.0005,0,1,0.5,0.06)">3,805.8 MHz</span>
<p style="left:15px;top:71px;transform:matrix(1,.0005,0,1,0.9,0.14)">P-core 1 T1 Effective Clock</p>
<span style="left:70px;top:71px;transform:matrix(1,.0005,0,1,0,0.14)">3,804.8 MHz</span>
<span style="left:94px;top:71px;transform:matrix(1,.0005,0,1,0.8,0.14)">3.2 MHz</span>
<span style="left:118px;top:71px;transform:matrix(1,.0005,0,1,0.9,0.14)">4,288.9 MHz</span>
<span style="left:143px;top:71px;transform:matrix(1,.0005,0,1,0.5,0.14)">3,805.8 MHz</span>
<p style="left:15px;top:76px;transform:matrix(1,.0005,0,1,0.9,0.22)">P-core 2 T0 Effective Clock</p>
<span style="left:70px;top:76px;transform:matrix(1,.0005,0,1,0,0.22)">3,804.9 MHz</span>
<span style="left:94px;top:76px;transform:matrix(1,.0005,0,1,0.8,0.22)">554.0 MHz</span>
<span style="left:118px;top:76px;transform:matrix(1,.0005,0,1,0.9,0.22)">4,287.9 MHz</span>
<span style="left:143px;top:76px;transform:matrix(1,.0005,0,1,0.5,0.22)">3,805.9 MHz</span>
<p style="left:15px;top:81px;transform:matrix(1,.0005,0,1,0.9,0.3)">P-core 2 T1 Effective Clock</p>
<span style="left:70px;top:81px;transform:matrix(1,.0005,0,1,0,0.3)">3,805.1 MHz</span>
<span style="left:94px;top:81px;transform:matrix(1,.0005,0,1,0.8,0.3)">2.7 MHz</span>
<span style="left:118px;top:81px;transform:matrix(1,.0005,0,1,0.9,0.3)">4,291.7 MHz</span>
<span style="left:143px;top:81px;transform:matrix(1,.0005,0,1,0.5,0.3)">3,805.8 MHz</span>
<p style="left:15px;top:86px;transform:matrix(1,.0005,0,1,0.9,0.38)">P-core 3 T0 Effective Clock</p>
<span style="left:70px;top:86px;transform:matrix(1,.0005,0,1,0,0.38)">3,803.3 MHz</span>
<span style="left:94px;top:86px;transform:matrix(1,.0005,0,1,0.8,0.38)">539.9 MHz</span>
<span style="left:118px;top:86px;transform:matrix(1,.0005,0,1,0.9,0.38)">4,288.8 MHz</span>
<span style="left:143px;top:86px;transform:matrix(1,.0005,0,1,0.5,0.38)">3,804.6 MHz</span>
<p style="left:15px;top:91px;transform:matrix(1,.0005,0,1,0.9,0.46)">P-core 3 T1 Effective Clock</p>
<span style="left:70px;top:91px;transform:matrix(1,.0005,0,1,0,0.46)">3,804.3 MHz</span>
<span style="left:94px;top:91px;transform:matrix(1,.0005,0,1,0.8,0.46)">4.7 MHz</span>
<span style="left:118px;top:91px;transform:matrix(1,.0005,0,1,0.9,0.46)">4,290.8 MHz</span>
<span style="left:143px;top:91px;transform:matrix(1,.0005,0,1,0.5,0.46)">3,806.3 MHz</span>
<p style="left:15px;top:96px;transform:matrix(1,.0005,0,1,0.9,0.54)">P-core 4 T0 Effective Clock</p>
<span style="left:70px;top:96px;transform:matrix(1,.0005,0,1,0,0.54)">3,804.3 MHz</span>
<span style="left:94px;top:96px;transform:matrix(1,.0005,0,1,0.8,0.54)">64.2 MHz</span>
<span style="left:118px;top:96px;transform:matrix(1,.0005,0,1,0.9,0.54)">4,293.9 MHz</span>
<span style="left:143px;top:96px;transform:matrix(1,.0005,0,1,0.5,0.54)">3,806.4 MHz</span>
<p style="left:15px;top:101px;transform:matrix(1,.0005,0,1,0.9,0.62)">P-core 4 T1 Effective Clock</p>
<span style="left:70px;top:101px;transform:matrix(1,.0005,0,1,0,0.62)">3,804.6 MHz</span>
<span style="left:94px;top:101px;transform:matrix(1,.0005,0,1,0.8,0.62)">5.8 MHz</span>
<span style="left:118px;top:101px;transform:matrix(1,.0005,0,1,0.9,0.62)">4,303.8 MHz</span>
<span style="left:143px;top:101px;transform:matrix(1,.0005,0,1,0.5,0.62)">3,806.7 MHz</span>
<p style="left:15px;top:106px;transform:matrix(1,.0005,0,1,0.9,0.7)">P-core 5 T0 Effective Clock</p>
<span style="left:70px;top:106px;transform:matrix(1,.0005,0,1,0,0.7)">3,804.7 MHz</span>
<span style="left:94px;top:106px;transform:matrix(1,.0005,0,1,0.8,0.7)">215.3 MHz</span>
<span style="left:118px;top:106px;transform:matrix(1,.0005,0,1,0.9,0.7)">4,307.9 MHz</span>
<span style="left:143px;top:106px;transform:matrix(1,.0005,0,1,0.5,0.7)">3,806.4 MHz</span>
<p style="left:15px;top:111px;transform:matrix(1,.0005,0,1,0.9,0.78)">P-core 5 T1 Effective Clock</p>
<span style="left:70px;top:111px;transform:matrix(1,.0005,0,1,0,0.78)">3,804.7 MHz</span>
<span style="left:94px;top:111px;transform:matrix(1,.0005,0,1,0.8,0.78)">2.0 MHz</span>
<span style="left:118px;top:111px;transform:matrix(1,.0005,0,1,0.9,0.78)">4,305.6 MHz</span>
<span style="left:143px;top:111px;transform:matrix(1,.0005,0,1,0.5,0.78)">3,806.3 MHz</span>
<p style="left:15px;top:116px;transform:matrix(1,.0005,0,1,0.9,0.86)">E-core 6 T0 Effective Clock</p>
<span style="left:70px;top:116px;transform:matrix(1,.0005,0,1,0,0.86)">3,296.0 MHz</span>
<span style="left:94px;top:116px;transform:matrix(1,.0005,0,1,0.8,0.86)">24.7 MHz</span>
<span style="left:118px;top:116px;transform:matrix(1,.0005,0,1,0.9,0.86)">3,489.9 MHz</span>
<span style="left:143px;top:116px;transform:matrix(1,.0005,0,1,0.5,0.86)">3,293.6 MHz</span>
<p style="left:15px;top:121px;transform:matrix(1,.0005,0,1,0.9,0.94)">E-core 7 T0 Effective Clock</p>
<span style="left:70px;top:121px;transform:matrix(1,.0005,0,1,0,0.94)">3,295.8 MHz</span>
<span style="left:94px;top:121px;transform:matrix(1,.0005,0,1,0.8,0.94)">32.5 MHz</span>
<span style="left:118px;top:121px;transform:matrix(1,.0005,0,1,0.9,0.94)">3,490.8 MHz</span>
<span style="left:143px;top:121px;transform:matrix(1,.0005,0,1,0.5,0.94)">3,293.8 MHz</span>
<p style="left:15px;top:127px;transform:matrix(1,.0005,0,1,0.9,0.02)">E-core 8 T0 Effective Clock</p>
<span style="left:70px;top:127px;transform:matrix(1,.0005,0,1,0,0.02)">3,295.6 MHz</span>
<span style="left:94px;top:127px;transform:matrix(1,.0005,0,1,0.8,0.02)">32.6 MHz</span>
<span style="left:118px;top:127px;transform:matrix(1,.0005,0,1,0.9,0.02)">3,489.6 MHz</span>
<span style="left:143px;top:127px;transform:matrix(1,.0005,0,1,0.5,0.02)">3,293.6 MHz</span>
<p style="left:15px;top:132px;transform:matrix(1,.0005,0,1,0.9,0.1)">E-core 9 T0 Effective Clock</p>
<span style="left:70px;top:132px;transform:matrix(1,.0005,0,1,0,0.1)">3,295.7 MHz</span>
<span style="left:94px;top:132px;transform:matrix(1,.0005,0,1,0.8,0.1)">28.5 MHz</span>
<span style="left:118px;top:132px;transform:matrix(1,.0005,0,1,0.9,0.1)">3,489.9 MHz</span>
<span style="left:143px;top:132px;transform:matrix(1,.0005,0,1,0.5,0.1)">3,293.8 MHz</span>
<p style="left:15px;top:137px;transform:matrix(1,.0005,0,1,0.9,0.18)">E-core 10 T0 Effective Clock</p>
<span style="left:70px;top:137px;transform:matrix(1,.0005,0,1,0,0.18)">3,296.0 MHz</span>
<span style="left:94px;top:137px;transform:matrix(1,.0005,0,1,0.8,0.18)">6.2 MHz</span>
<span style="left:118px;top:137px;transform:matrix(1,.0005,0,1,0.9,0.18)">3,490.8 MHz</span>
<span style="left:143px;top:137px;transform:matrix(1,.0005,0,1,0.5,0.18)">3,293.9 MHz</span>
<p style="left:15px;top:142px;transform:matrix(1,.0005,0,1,0.9,0.26)">E-core 11 T0 Effective Clock</p>
<span style="left:70px;top:142px;transform:matrix(1,.0005,0,1,0,0.26)">3,296.1 MHz</span>
<span style="left:94px;top:142px;transform:matrix(1,.0005,0,1,0.8,0.26)">3.1 MHz</span>
<span style="left:118px;top:142px;transform:matrix(1,.0005,0,1,0.9,0.26)">3,490.1 MHz</span>
<span style="left:143px;top:142px;transform:matrix(1,.0005,0,1,0.5,0.26)">3,293.9 MHz</span>
<p style="left:15px;top:147px;transform:matrix(1,.0005,0,1,0.9,0.34)">E-core 12 T0 Effective Clock</p>
<span style="left:70px;top:147px;transform:matrix(1,.0005,0,1,0,0.34)">3,296.1 MHz</span>
<span style="left:94px;top:147px;transform:matrix(1,.0005,0,1,0.8,0.34)">2.7 MHz</span>
<span style="left:118px;top:147px;transform:matrix(1,.0005,0,1,0.9,0.34)">3,490.1 MHz</span>
<span style="left:143px;top:147px;transform:matrix(1,.0005,0,1,0.5,0.34)">3,293.9 MHz</span>
<p style="left:15px;top:152px;transform:matrix(1,.0005,0,1,0.9,0.42)">E-core 13 T0 Effective Clock</p>
<span style="left:70px;top:152px;transform:matrix(1,.0005,0,1,0,0.42)">3,296.3 MHz</span>
<span style="left:94px;top:152px;transform:matrix(1,.0005,0,1,0.8,0.42)">2.8 MHz</span>
<span style="left:118px;top:152px;transform:matrix(1,.0005,0,1,0.9,0.42)">3,490.1 MHz</span>
<span style="left:143px;top:152px;transform:matrix(1,.0005,0,1,0.5,0.42)">3,293.9 MHz</span>
<p style="left:10px;top:157px;transform:matrix(1,.0005,0,1,0.9,0.5)">Average Effective Clock</p>
<span style="left:70px;top:157px;transform:matrix(1,.0005,0,1,0,0.5)">3,604.6 MHz</span>
<span style="left:94px;top:157px;transform:matrix(1,.0005,0,1,0.8,0.5)">119.4 MHz</span>
<span style="left:118px;top:157px;transform:matrix(1,.0005,0,1,0.9,0.5)">4,006.4 MHz</span>
<span style="left:143px;top:157px;transform:matrix(1,.0005,0,1,0.5,0.5)">3,660.6 MHz</span>
<p style="left:15px;top:162px;transform:matrix(1,.0005,0,1,0.9,0.58)">Core Usage</p>
<span style="left:70px;top:162px;transform:matrix(1,.0005,0,1,0,0.58)">100.0 %</span>
<span style="left:94px;top:162px;transform:matrix(1,.0005,0,1,0.8,0.58)">0.3 %</span>
<span style="left:118px;top:162px;transform:matrix(1,.0005,0,1,0.9,0.58)">100.0 %</span>
<span style="left:143px;top:162px;transform:matrix(1,.0005,0,1,0.5,0.58)">99.9 %</span>
<p style="left:10px;top:167px;transform:matrix(1,.0005,0,1,0.9,0.66)">Max CPU/Thread Usage</p>
<span style="left:70px;top:167px;transform:matrix(1,.0005,0,1,0,0.66)">100.0 %</span>
<span style="left:94px;top:167px;transform:matrix(1,.0005,0,1,0.8,0.66)">18.7 %</span>
<span style="left:118px;top:167px;transform:matrix(1,.0005,0,1,0.9,0.66)">100.0 %</span>
<span style="left:143px;top:167px;transform:matrix(1,.0005,0,1,0.5,0.66)">99.9 %</span>
<p style="left:10px;top:172px;transform:matrix(1,.0005,0,1,0.9,0.74)">Total CPU Usage</p>
<span style="left:70px;top:172px;transform:matrix(1,.0005,0,1,0,0.74)">100.0 %</span>
<span style="left:94px;top:172px;transform:matrix(1,.0005,0,1,0.8,0.74)">3.3 %</span>
<span style="left:118px;top:172px;transform:matrix(1,.0005,0,1,0.9,0.74)">100.0 %</span>
<span style="left:143px;top:172px;transform:matrix(1,.0005,0,1,0.5,0.74)">99.9 %</span>
<p style="left:10px;top:177px;transform:matrix(1,.0005,0,1,0.9,0.82)">On-Demand Clock Modulation</p>
<span style="left:70px;top:177px;transform:matrix(1,.0005,0,1,0,0.82)">100.0 %</span>
<span style="left:94px;top:177px;transform:matrix(1,.0005,0,1,0.8,0.82)">100.0 %</span>
<span style="left:118px;top:177px;transform:matrix(1,.0005,0,1,0.9,0.82)">100.0 %</span>
<span style="left:143px;top:177px;transform:matrix(1,.0005,0,1,0.5,0.82)">100.0 %</span>
<p style="left:15px;top:182px;transform:matrix(1,.0005,0,1,0.9,0.9)">Core Utility</p>
<span style="left:70px;top:182px;transform:matrix(1,.0005,0,1,0,0.9)">135.2 %</span>
<span style="left:94px;top:182px;transform:matrix(1,.0005,0,1,0.8,0.9)">0.0 %</span>
<span style="left:118px;top:182px;transform:matrix(1,.0005,0,1,0.9,0.9)">162.7 %</span>
<span style="left:143px;top:182px;transform:matrix(1,.0005,0,1,0.5,0.9)">135.6 %</span>
<p style="left:10px;top:187px;transform:matrix(1,.0005,0,1,0.9,0.98)">Total CPU Utility</p>
<span style="left:70px;top:187px;transform:matrix(1,.0005,0,1,0,0.98)">135.2 %</span>
<span style="left:94px;top:187px;transform:matrix(1,.0005,0,1,0.8,0.98)">5.0 %</span>
<span style="left:118px;top:187px;transform:matrix(1,.0005,0,1,0.9,0.98)">150.5 %</span>
<span style="left:143px;top:187px;transform:matrix(1,.0005,0,1,0.5,0.98)">135.6 %</span>
<p style="left:15px;top:193px;transform:matrix(1,.0005,0,1,0.9,0.06)">Core Ratios</p>
<span style="left:70px;top:193px;transform:matrix(1,.0005,0,1,0,0.06)">34.9 x</span>
<span style="left:94px;top:193px;transform:matrix(1,.0005,0,1,0.8,0.06)">16.4 x</span>
<span style="left:118px;top:193px;transform:matrix(1,.0005,0,1,0.9,0.06)">44.0 x</span>
<span style="left:143px;top:193px;transform:matrix(1,.0005,0,1,0.5,0.06)">34.9 x</span>
<p style="left:10px;top:198px;transform:matrix(1,.0005,0,1,0.9,0.14)">Uncore Ratio</p>
<span style="left:70px;top:198px;transform:matrix(1,.0005,0,1,0,0.14)">32.0 x</span>
<span style="left:94px;top:198px;transform:matrix(1,.0005,0,1,0.8,0.14)">8.0 x</span>
<span style="left:118px;top:198px;transform:matrix(1,.0005,0,1,0.9,0.14)">38.0 x</span>
<span style="left:143px;top:198px;transform:matrix(1,.0005,0,1,0.5,0.14)">32.1 x</span>
<b style="left:10px;top:208px;transform:matrix(1,.0005,0,1,0.9,0.3)">CPU [#0]: Intel Core i7-13650HX: DTS</b>
<p style="left:15px;top:213px;transform:matrix(1,.0005,0,1,0.9,0.38)">Core Temperatures</p>
<span style="left:70px;top:213px;transform:matrix(1,.0005,0,1,0,0.38)">86 °C</span>
<span style="left:94px;top:213px;transform:matrix(1,.0005,0,1,0.8,0.38)">46 °C</span>
<span class="d" style="left:118px;top:213px;transform:matrix(1,.0005,0,1,0.9,0.38)">99 °C</span>
<span style="left:143px;top:213px;transform:matrix(1,.0005,0,1,0.5,0.38)">86 °C</span>
<p style="left:15px;top:218px;transform:matrix(1,.0005,0,1,0.9,0.46)">Core Distance to TjMAX</p>
<span style="left:70px;top:218px;transform:matrix(1,.0005,0,1,0,0.46)">14 °C</span>
<span class="d" style="left:94px;top:218px;transform:matrix(1,.0005,0,1,0.8,0.46)">1 °C</span>
<span style="left:118px;top:218px;transform:matrix(1,.0005,0,1,0.9,0.46)">54 °C</span>
<span style="left:143px;top:218px;transform:matrix(1,.0005,0,1,0.5,0.46)">14 °C</span>
<p style="left:10px;top:223px;transform:matrix(1,.0005,0,1,0.9,0.54)">CPU Package</p>
<span class="d" style="left:70px;top:223px;transform:matrix(1,.0005,0,1,0,0.54)">98 °C</span>
<span style="left:94px;top:223px;transform:matrix(1,.0005,0,1,0.8,0.54)">57 °C</span>
<span class="d" style="left:118px;top:223px;transform:matrix(1,.0005,0,1,0.9,0.54)">99 °C</span>
<span class="d" style="left:143px;top:223px;transform:matrix(1,.0005,0,1,0.5,0.54)">98 °C</span>
<p style="left:10px;top:228px;transform:matrix(1,.0005,0,1,0.9,0.62)">Core Max</p>
<span class="d" style="left:70px;top:228px;transform:matrix(1,.0005,0,1,0,0.62)">98 °C</span>
<span style="left:94px;top:228px;transform:matrix(1,.0005,0,1,0.8,0.62)">49 °C</span>
<span class="d" style="left:118px;top:228px;transform:matrix(1,.0005,0,1,0.9,0.62)">99 °C</span>
<span class="d" style="left:143px;top:228px;transform:matrix(1,.0005,0,1,0.5,0.62)">98 °C</span>
<p style="left:15px;top:233px;transform:matrix(1,.0005,0,1,0.9,0.7)">Core Thermal Throttling</p>
<span class="d" style="left:70px;top:233px;transform:matrix(1,.0005,0,1,0,0.7)">Yes</span>
<span style="left:94px;top:233px;transform:matrix(1,.0005,0,1,0.8,0.7)">No</span>
<span class="d" style="left:118px;top:233px;transform:matrix(1,.0005,0,1,0.9,0.7)">Yes</span>
<p style="left:15px;top:238px;transform:matrix(1,.0005,0,1,0.9,0.78)">P-core 0 Thermal Throttling</p>
<span style="left:70px;top:238px;transform:matrix(1,.0005,0,1,0,0.78)">No</span>
<span style="left:94px;top:238px;transform:matrix(1,.0005,0,1,0.8,0.78)">No</span>
<span style="left:118px;top:238px;transform:matrix(1,.0005,0,1,0.9,0.78)">No</span>
<p style="left:15px;top:243px;transform:matrix(1,.0005,0,1,0.9,0.86)">P-core 1 Thermal Throttling</p>
<span class="d" style="left:70px;top:243px;transform:matrix(1,.0005,0,1,0,0.86)">Yes</span>
<span style="left:94px;top:243px;transform:matrix(1,.0005,0,1,0.8,0.86)">No</span>
<span class="d" style="left:118px;top:243px;transform:matrix(1,.0005,0,1,0.9,0.86)">Yes</span>
<p style="left:15px;top:248px;transform:matrix(1,.0005,0,1,0.9,0.94)">P-core 2 Thermal Throttling</p>
<span style="left:70px;top:248px;transform:matrix(1,.0005,0,1,0,0.94)">No</span>
<span style="left:94px;top:248px;transform:matrix(1,.0005,0,1,0.8,0.94)">No</span>
<span style="left:118px;top:248px;transform:matrix(1,.0005,0,1,0.9,0.94)">No</span>
<p style="left:15px;top:254px;transform:matrix(1,.0005,0,1,0.9,0.02)">P-core 3 Thermal Throttling</p>
<span class="d" style="left:70px;top:254px;transform:matrix(1,.0005,0,1,0,0.02)">Yes</span>
<span style="left:94px;top:254px;transform:matrix(1,.0005,0,1,0.8,0.02)">No</span>
<span class="d" style="left:118px;top:254px;transform:matrix(1,.0005,0,1,0.9,0.02)">Yes</span>
<p style="left:15px;top:259px;transform:matrix(1,.0005,0,1,0.9,0.1)">P-core 4 Thermal Throttling</p>
<span style="left:70px;top:259px;transform:matrix(1,.0005,0,1,0,0.1)">No</span>
<span style="left:94px;top:259px;transform:matrix(1,.0005,0,1,0.8,0.1)">No</span>
<span style="left:118px;top:259px;transform:matrix(1,.0005,0,1,0.9,0.1)">No</span>
<p style="left:15px;top:264px;transform:matrix(1,.0005,0,1,0.9,0.18)">P-core 5 Thermal Throttling</p>
<span class="d" style="left:70px;top:264px;transform:matrix(1,.0005,0,1,0,0.18)">Yes</span>
<span style="left:94px;top:264px;transform:matrix(1,.0005,0,1,0.8,0.18)">No</span>
<span class="d" style="left:118px;top:264px;transform:matrix(1,.0005,0,1,0.9,0.18)">Yes</span>
<p style="left:15px;top:269px;transform:matrix(1,.0005,0,1,0.9,0.26)">E-core 6 Thermal Throttling</p>
<span style="left:70px;top:269px;transform:matrix(1,.0005,0,1,0,0.26)">No</span>
<span style="left:94px;top:269px;transform:matrix(1,.0005,0,1,0.8,0.26)">No</span>
<span style="left:118px;top:269px;transform:matrix(1,.0005,0,1,0.9,0.26)">No</span>
<p style="left:15px;top:274px;transform:matrix(1,.0005,0,1,0.9,0.34)">E-core 7 Thermal Throttling</p>
<span style="left:70px;top:274px;transform:matrix(1,.0005,0,1,0,0.34)">No</span>
<span style="left:94px;top:274px;transform:matrix(1,.0005,0,1,0.8,0.34)">No</span>
<span style="left:118px;top:274px;transform:matrix(1,.0005,0,1,0.9,0.34)">No</span>
<p style="left:15px;top:279px;transform:matrix(1,.0005,0,1,0.9,0.42)">E-core 8 Thermal Throttling</p>
<span style="left:70px;top:279px;transform:matrix(1,.0005,0,1,0,0.42)">No</span>
<span style="left:94px;top:279px;transform:matrix(1,.0005,0,1,0.8,0.42)">No</span>
<span style="left:118px;top:279px;transform:matrix(1,.0005,0,1,0.9,0.42)">No</span>
<p style="left:15px;top:284px;transform:matrix(1,.0005,0,1,0.9,0.5)">E-core 9 Thermal Throttling</p>
<span style="left:70px;top:284px;transform:matrix(1,.0005,0,1,0,0.5)">No</span>
<span style="left:94px;top:284px;transform:matrix(1,.0005,0,1,0.8,0.5)">No</span>
<span style="left:118px;top:284px;transform:matrix(1,.0005,0,1,0.9,0.5)">No</span>
<p style="left:15px;top:289px;transform:matrix(1,.0005,0,1,0.9,0.58)">E-core 10 Thermal Throttling</p>
<span style="left:70px;top:289px;transform:matrix(1,.0005,0,1,0,0.58)">No</span>
<span style="left:94px;top:289px;transform:matrix(1,.0005,0,1,0.8,0.58)">No</span>
<span style="left:118px;top:289px;transform:matrix(1,.0005,0,1,0.9,0.58)">No</span>
<p style="left:15px;top:294px;transform:matrix(1,.0005,0,1,0.9,0.66)">E-core 11 Thermal Throttling</p>
<span style="left:70px;top:294px;transform:matrix(1,.0005,0,1,0,0.66)">No</span>
<span style="left:94px;top:294px;transform:matrix(1,.0005,0,1,0.8,0.66)">No</span>
<span style="left:118px;top:294px;transform:matrix(1,.0005,0,1,0.9,0.66)">No</span>
<p style="left:15px;top:299px;transform:matrix(1,.0005,0,1,0.9,0.74)">E-core 12 Thermal Throttling</p>
<span style="left:70px;top:299px;transform:matrix(1,.0005,0,1,0,0.74)">No</span>
<span style="left:94px;top:299px;transform:matrix(1,.0005,0,1,0.8,0.74)">No</span>
<span style="left:118px;top:299px;transform:matrix(1,.0005,0,1,0.9,0.74)">No</span>
<p style="left:15px;top:304px;transform:matrix(1,.0005,0,1,0.9,0.82)">E-core 13 Thermal Throttling</p>
<span style="left:70px;top:304px;transform:matrix(1,.0005,0,1,0,0.82)">No</span>
<span style="left:94px;top:304px;transform:matrix(1,.0005,0,1,0.8,0.82)">No</span>
<span style="left:118px;top:304px;transform:matrix(1,.0005,0,1,0.9,0.82)">No</span>
<p style="left:15px;top:309px;transform:matrix(1,.0005,0,1,0.9,0.9)">Core Critical Temperature</p>
<span style="left:70px;top:309px;transform:matrix(1,.0005,0,1,0,0.9)">No</span>
<span style="left:94px;top:309px;transform:matrix(1,.0005,0,1,0.8,0.9)">No</span>
<span style="left:118px;top:309px;transform:matrix(1,.0005,0,1,0.9,0.9)">No</span>
<p style="left:15px;top:314px;transform:matrix(1,.0005,0,1,0.9,0.98)">P-core 0 Critical Temperature</p>
<span style="left:70px;top:314px;transform:matrix(1,.0005,0,1,0,0.98)">No</span>
<span style="left:94px;top:314px;transform:matrix(1,.0005,0,1,0.8,0.98)">No</span>
<span style="left:118px;top:314px;transform:matrix(1,.0005,0,1,0.9,0.98)">No</span>
<p style="left:15px;top:320px;transform:matrix(1,.0005,0,1,0.9,0.06)">P-core 1 Critical Temperature</p>
<span style="left:70px;top:320px;transform:matrix(1,.0005,0,1,0,0.06)">No</span>
<span style="left:94px;top:320px;transform:matrix(1,.0005,0,1,0.8,0.06)">No</span>
<span style="left:118px;top:320px;transform:matrix(1,.0005,0,1,0.9,0.06)">No</span>
<p style="left:15px;top:325px;transform:matrix(1,.0005,0,1,0.9,0.14)">P-core 2 Critical Temperature</p>
<span style="left:70px;top:325px;transform:matrix(1,.0005,0,1,0,0.14)">No</span>
<span style="left:94px;top:325px;transform:matrix(1,.0005,0,1,0.8,0.14)">No</span>
<span style="left:118px;top:325px;transform:matrix(1,.0005,0,1,0.9,0.14)">No</span>
<p style="left:15px;top:330px;transform:matrix(1,.0005,0,1,0.9,0.22)">P-core 3 Critical Temperature</p>
<span style="left:70px;top:330px;transform:matrix(1,.0005,0,1,0,0.22)">No</span>
<span style="left:94px;top:330px;transform:matrix(1,.0005,0,1,0.8,0.22)">No</span>
<span style="left:118px;top:330px;transform:matrix(1,.0005,0,1,0.9,0.22)">No</span>
<p style="left:15px;top:335px;transform:matrix(1,.0005,0,1,0.9,0.3)">P-core 4 Critical Temperature</p>
<span style="left:70px;top:335px;transform:matrix(1,.0005,0,1,0,0.3)">No</span>
<span style="left:94px;top:335px;transform:matrix(1,.0005,0,1,0.8,0.3)">No</span>
<span style="left:118px;top:335px;transform:matrix(1,.0005,0,1,0.9,0.3)">No</span>
<p style="left:15px;top:340px;transform:matrix(1,.0005,0,1,0.9,0.38)">P-core 5 Critical Temperature</p>
<span style="left:70px;top:340px;transform:matrix(1,.0005,0,1,0,0.38)">No</span>
<span style="left:94px;top:340px;transform:matrix(1,.0005,0,1,0.8,0.38)">No</span>
<span style="left:118px;top:340px;transform:matrix(1,.0005,0,1,0.9,0.38)">No</span>
<p style="left:15px;top:345px;transform:matrix(1,.0005,0,1,0.9,0.46)">E-core 6 Critical Temperature</p>
<span style="left:70px;top:345px;transform:matrix(1,.0005,0,1,0,0.46)">No</span>
<span style="left:94px;top:345px;transform:matrix(1,.0005,0,1,0.8,0.46)">No</span>
<span style="left:118px;top:345px;transform:matrix(1,.0005,0,1,0.9,0.46)">No</span>
<p style="left:15px;top:350px;transform:matrix(1,.0005,0,1,0.9,0.54)">E-core 7 Critical Temperature</p>
<span style="left:70px;top:350px;transform:matrix(1,.0005,0,1,0,0.54)">No</span>
<span style="left:94px;top:350px;transform:matrix(1,.0005,0,1,0.8,0.54)">No</span>
<span style="left:118px;top:350px;transform:matrix(1,.0005,0,1,0.9,0.54)">No</span>
<p style="left:15px;top:355px;transform:matrix(1,.0005,0,1,0.9,0.62)">E-core 8 Critical Temperature</p>
<span style="left:70px;top:355px;transform:matrix(1,.0005,0,1,0,0.62)">No</span>
<span style="left:94px;top:355px;transform:matrix(1,.0005,0,1,0.8,0.62)">No</span>
<span style="left:118px;top:355px;transform:matrix(1,.0005,0,1,0.9,0.62)">No</span>
<p style="left:15px;top:360px;transform:matrix(1,.0005,0,1,0.9,0.7)">E-core 9 Critical Temperature</p>
<span style="left:70px;top:360px;transform:matrix(1,.0005,0,1,0,0.7)">No</span>
<span style="left:94px;top:360px;transform:matrix(1,.0005,0,1,0.8,0.7)">No</span>
<span style="left:118px;top:360px;transform:matrix(1,.0005,0,1,0.9,0.7)">No</span>
<p style="left:15px;top:365px;transform:matrix(1,.0005,0,1,0.9,0.78)">E-core 10 Critical Temperature</p>
<span style="left:70px;top:365px;transform:matrix(1,.0005,0,1,0,0.78)">No</span>
<span style="left:94px;top:365px;transform:matrix(1,.0005,0,1,0.8,0.78)">No</span>
<span style="left:118px;top:365px;transform:matrix(1,.0005,0,1,0.9,0.78)">No</span>
<p style="left:15px;top:370px;transform:matrix(1,.0005,0,1,0.9,0.86)">E-core 11 Critical Temperature</p>
<span style="left:70px;top:370px;transform:matrix(1,.0005,0,1,0,0.86)">No</span>
<span style="left:94px;top:370px;transform:matrix(1,.0005,0,1,0.8,0.86)">No</span>
<span style="left:118px;top:370px;transform:matrix(1,.0005,0,1,0.9,0.86)">No</span>
<p style="left:15px;top:375px;transform:matrix(1,.0005,0,1,0.9,0.94)">E-core 12 Critical Temperature</p>
<span style="left:70px;top:375px;transform:matrix(1,.0005,0,1,0,0.94)">No</span>
<span style="left:94px;top:375px;transform:matrix(1,.0005,0,1,0.8,0.94)">No</span>
<span style="left:118px;top:375px;transform:matrix(1,.0005,0,1,0.9,0.94)">No</span>
<p style="left:15px;top:381px;transform:matrix(1,.0005,0,1,0.9,0.02)">E-core 13 Critical Temperature</p>
<span style="left:70px;top:381px;transform:matrix(1,.0005,0,1,0,0.02)">No</span>
<span style="left:94px;top:381px;transform:matrix(1,.0005,0,1,0.8,0.02)">No</span>
<span style="left:118px;top:381px;transform:matrix(1,.0005,0,1,0.9,0.02)">No</span>
<p style="left:15px;top:386px;transform:matrix(1,.0005,0,1,0.9,0.1)">Core Power Limit Exceeded</p>
<span style="left:70px;top:386px;transform:matrix(1,.0005,0,1,0,0.1)">No</span>
<span style="left:94px;top:386px;transform:matrix(1,.0005,0,1,0.8,0.1)">No</span>
<span style="left:118px;top:386px;transform:matrix(1,.0005,0,1,0.9,0.1)">No</span>
<p style="left:10px;top:391px;transform:matrix(1,.0005,0,1,0.9,0.18)">Package/Ring Thermal Throttling</p>
<span class="d" style="left:70px;top:391px;transform:matrix(1,.0005,0,1,0,0.18)">Yes</span>
<span style="left:94px;top:391px;transform:matrix(1,.0005,0,1,0.8,0.18)">No</span>
<span class="d" style="left:118px;top:391px;transform:matrix(1,.0005,0,1,0.9,0.18)">Yes</span>
<p style="left:10px;top:396px;transform:matrix(1,.0005,0,1,0.9,0.26)">Package/Ring Critical Temperature</p>
<span style="left:70px;top:396px;transform:matrix(1,.0005,0,1,0,0.26)">No</span>
<span style="left:94px;top:396px;transform:matrix(1,.0005,0,1,0.8,0.26)">No</span>
<span style="left:118px;top:396px;transform:matrix(1,.0005,0,1,0.9,0.26)">No</span>
<p style="left:195px;top:15px;transform:matrix(1,.0005,0,1,0.3,0.26)">Package/Ring Power Limit Exceeded</p>
<span style="left:260px;top:15px;transform:matrix(1,.0005,0,1,0.9,0.26)">No</span>
<span style="left:285px;top:15px;transform:matrix(1,.0005,0,1,0.3,0.26)">No</span>
<span style="left:309px;top:15px;transform:matrix(1,.0005,0,1,0.8,0.26)">No</span>
<b style="left:195px;top:25px;transform:matrix(1,.0005,0,1,0.3,0.42)">CPU [#0]: Intel Core i7-13650HX: Enhanced</b>
<p style="left:195px;top:30px;transform:matrix(1,.0005,0,1,0.3,0.5)">CPU Package</p>
<span class="d" style="left:260px;top:30px;transform:matrix(1,.0005,0,1,0.9,0.5)">98 °C</span>
<span style="left:285px;top:30px;transform:matrix(1,.0005,0,1,0.3,0.5)">55 °C</span>
<span class="d" style="left:309px;top:30px;transform:matrix(1,.0005,0,1,0.8,0.5)">99 °C</span>
<span class="d" style="left:334px;top:30px;transform:matrix(1,.0005,0,1,0.3,0.5)">98 °C</span>
<p style="left:195px;top:35px;transform:matrix(1,.0005,0,1,0.3,0.58)">CPU IA Cores</p>
<span class="d" style="left:260px;top:35px;transform:matrix(1,.0005,0,1,0.9,0.58)">98 °C</span>
<span style="left:285px;top:35px;transform:matrix(1,.0005,0,1,0.3,0.58)">49 °C</span>
<span class="d" style="left:309px;top:35px;transform:matrix(1,.0005,0,1,0.8,0.58)">99 °C</span>
<span class="d" style="left:334px;top:35px;transform:matrix(1,.0005,0,1,0.3,0.58)">98 °C</span>
<p style="left:195px;top:40px;transform:matrix(1,.0005,0,1,0.3,0.66)">CPU GT Cores (Graphics)</p>
<span style="left:260px;top:40px;transform:matrix(1,.0005,0,1,0.9,0.66)">68 °C</span>
<span style="left:285px;top:40px;transform:matrix(1,.0005,0,1,0.3,0.66)">50 °C</span>
<span style="left:309px;top:40px;transform:matrix(1,.0005,0,1,0.8,0.66)">69 °C</span>
<span style="left:334px;top:40px;transform:matrix(1,.0005,0,1,0.3,0.66)">68 °C</span>
<p style="left:200px;top:45px;transform:matrix(1,.0005,0,1,0.6,0.74)">Voltage Offsets</p>
<span style="left:285px;top:45px;transform:matrix(1,.0005,0,1,0.3,0.74)">0.000 V</span>
<span style="left:309px;top:45px;transform:matrix(1,.0005,0,1,0.8,0.74)">0.000 V</span>
<p style="left:195px;top:50px;transform:matrix(1,.0005,0,1,0.3,0.82)">VDDQ TX Voltage</p>
<span style="left:260px;top:50px;transform:matrix(1,.0005,0,1,0.9,0.82)">1.200 V</span>
<span style="left:285px;top:50px;transform:matrix(1,.0005,0,1,0.3,0.82)">1.200 V</span>
<span style="left:309px;top:50px;transform:matrix(1,.0005,0,1,0.8,0.82)">1.200 V</span>
<span style="left:334px;top:50px;transform:matrix(1,.0005,0,1,0.3,0.82)">1.200 V</span>
<p style="left:195px;top:55px;transform:matrix(1,.0005,0,1,0.3,0.9)">VR VCC Current (SVID IOUT)</p>
<span style="left:260px;top:55px;transform:matrix(1,.0005,0,1,0.9,0.9)">81.001 A</span>
<span style="left:285px;top:55px;transform:matrix(1,.0005,0,1,0.3,0.9)">3.371 A</span>
<span style="left:309px;top:55px;transform:matrix(1,.0005,0,1,0.8,0.9)">104.627 A</span>
<span style="left:334px;top:55px;transform:matrix(1,.0005,0,1,0.3,0.9)">81.704 A</span>
<p style="left:195px;top:60px;transform:matrix(1,.0005,0,1,0.3,0.98)">CPU Package Power</p>
<span style="left:260px;top:60px;transform:matrix(1,.0005,0,1,0.9,0.98)">95.004 W</span>
<span style="left:285px;top:60px;transform:matrix(1,.0005,0,1,0.3,0.98)">13.498 W</span>
<span style="left:309px;top:60px;transform:matrix(1,.0005,0,1,0.8,0.98)">116.717 W</span>
<span style="left:334px;top:60px;transform:matrix(1,.0005,0,1,0.3,0.98)">95.902 W</span>
<p style="left:195px;top:66px;transform:matrix(1,.0005,0,1,0.3,0.06)">IA Cores Power</p>
<span style="left:260px;top:66px;transform:matrix(1,.0005,0,1,0.9,0.06)">86.736 W</span>
<span style="left:285px;top:66px;transform:matrix(1,.0005,0,1,0.3,0.06)">5.262 W</span>
<span style="left:309px;top:66px;transform:matrix(1,.0005,0,1,0.8,0.06)">105.635 W</span>
<span style="left:334px;top:66px;transform:matrix(1,.0005,0,1,0.3,0.06)">84.528 W</span>
<p style="left:195px;top:71px;transform:matrix(1,.0005,0,1,0.3,0.14)">Total System Power</p>
<span style="left:260px;top:71px;transform:matrix(1,.0005,0,1,0.9,0.14)">157.140 W</span>
<span style="left:285px;top:71px;transform:matrix(1,.0005,0,1,0.3,0.14)">85.534 W</span>
<span style="left:309px;top:71px;transform:matrix(1,.0005,0,1,0.8,0.14)">174.718 W</span>
<span style="left:334px;top:71px;transform:matrix(1,.0005,0,1,0.3,0.14)">158.714 W</span>
<p style="left:195px;top:76px;transform:matrix(1,.0005,0,1,0.3,0.22)">System Agent Power</p>
<span style="left:260px;top:76px;transform:matrix(1,.0005,0,1,0.9,0.22)">7.101 W</span>
<span style="left:285px;top:76px;transform:matrix(1,.0005,0,1,0.3,0.22)">6.629 W</span>
<span style="left:309px;top:76px;transform:matrix(1,.0005,0,1,0.8,0.22)">7.956 W</span>
<span style="left:334px;top:76px;transform:matrix(1,.0005,0,1,0.3,0.22)">7.105 W</span>
<p style="left:195px;top:81px;transform:matrix(1,.0005,0,1,0.3,0.3)">Rest-of-Chip Power</p>
<span style="left:260px;top:81px;transform:matrix(1,.0005,0,1,0.9,0.3)">0.417 W</span>
<span style="left:285px;top:81px;transform:matrix(1,.0005,0,1,0.3,0.3)">0.407 W</span>
<span style="left:309px;top:81px;transform:matrix(1,.0005,0,1,0.8,0.3)">0.435 W</span>
<span style="left:334px;top:81px;transform:matrix(1,.0005,0,1,0.3,0.3)">0.408 W</span>
<p style="left:195px;top:86px;transform:matrix(1,.0005,0,1,0.3,0.38)">PL1 Power Limit (Static)</p>
<span style="left:260px;top:86px;transform:matrix(1,.0005,0,1,0.9,0.38)">125.0 W</span>
<span style="left:285px;top:86px;transform:matrix(1,.0005,0,1,0.3,0.38)">125.0 W</span>
<span style="left:309px;top:86px;transform:matrix(1,.0005,0,1,0.8,0.38)">125.0 W</span>
<span style="left:334px;top:86px;transform:matrix(1,.0005,0,1,0.3,0.38)">125.0 W</span>
<p style="left:195px;top:91px;transform:matrix(1,.0005,0,1,0.3,0.46)">PL1 Power Limit (Dynamic)</p>
<span style="left:260px;top:91px;transform:matrix(1,.0005,0,1,0.9,0.46)">125.0 W</span>
<span style="left:285px;top:91px;transform:matrix(1,.0005,0,1,0.3,0.46)">125.0 W</span>
<span style="left:309px;top:91px;transform:matrix(1,.0005,0,1,0.8,0.46)">125.0 W</span>
<span style="left:334px;top:91px;transform:matrix(1,.0005,0,1,0.3,0.46)">125.0 W</span>
<p style="left:195px;top:96px;transform:matrix(1,.0005,0,1,0.3,0.54)">PL2 Power Limit (Static)</p>
<span style="left:260px;top:96px;transform:matrix(1,.0005,0,1,0.9,0.54)">130.0 W</span>
<span style="left:285px;top:96px;transform:matrix(1,.0005,0,1,0.3,0.54)">130.0 W</span>
<span style="left:309px;top:96px;transform:matrix(1,.0005,0,1,0.8,0.54)">130.0 W</span>
<span style="left:334px;top:96px;transform:matrix(1,.0005,0,1,0.3,0.54)">130.0 W</span>
<p style="left:195px;top:101px;transform:matrix(1,.0005,0,1,0.3,0.62)">PL2 Power Limit (Dynamic)</p>
<span style="left:260px;top:101px;transform:matrix(1,.0005,0,1,0.9,0.62)">130.0 W</span>
<span style="left:285px;top:101px;transform:matrix(1,.0005,0,1,0.3,0.62)">130.0 W</span>
<span style="left:309px;top:101px;transform:matrix(1,.0005,0,1,0.8,0.62)">130.0 W</span>
<span style="left:334px;top:101px;transform:matrix(1,.0005,0,1,0.3,0.62)">130.0 W</span>
<p style="left:195px;top:106px;transform:matrix(1,.0005,0,1,0.3,0.7)">Current cTDP Level</p>
<span style="left:260px;top:106px;transform:matrix(1,.0005,0,1,0.9,0.7)">0</span>
<span style="left:285px;top:106px;transform:matrix(1,.0005,0,1,0.3,0.7)">0</span>
<span style="left:309px;top:106px;transform:matrix(1,.0005,0,1,0.8,0.7)">0</span>
<span style="left:334px;top:106px;transform:matrix(1,.0005,0,1,0.3,0.7)">0</span>
<p style="left:200px;top:111px;transform:matrix(1,.0005,0,1,0.6,0.78)">OC Ratio Limits</p>
<span style="left:285px;top:111px;transform:matrix(1,.0005,0,1,0.3,0.78)">31.0 x</span>
<span style="left:309px;top:111px;transform:matrix(1,.0005,0,1,0.8,0.78)">44.0 x</span>
<b style="left:195px;top:121px;transform:matrix(1,.0005,0,1,0.3,0.94)">Memory Timings</b>
<p style="left:195px;top:127px;transform:matrix(1,.0005,0,1,0.3,0.02)">Memory Clock</p>
<span style="left:260px;top:127px;transform:matrix(1,.0005,0,1,0.9,0.02)">997.6 MHz</span>
<span style="left:285px;top:127px;transform:matrix(1,.0005,0,1,0.3,0.02)">997.6 MHz</span>
<span style="left:309px;top:127px;transform:matrix(1,.0005,0,1,0.8,0.02)">2,394.1 MHz</span>
<span style="left:334px;top:127px;transform:matrix(1,.0005,0,1,0.3,0.02)">1,026.1 MHz</span>
<b style="left:195px;top:137px;transform:matrix(1,.0005,0,1,0.3,0.18)">CPU [#0]: Intel Core i7-13650HX: Performance Limit Reasons</b>
<p style="left:200px;top:142px;transform:matrix(1,.0005,0,1,0.6,0.26)">IA Limit Reasons</p>
<span style="left:260px;top:142px;transform:matrix(1,.0005,0,1,0.9,0.26)">Yes</span>
<span style="left:285px;top:142px;transform:matrix(1,.0005,0,1,0.3,0.26)">No</span>
<span style="left:309px;top:142px;transform:matrix(1,.0005,0,1,0.8,0.26)">Yes</span>
<p style="left:200px;top:147px;transform:matrix(1,.0005,0,1,0.6,0.34)">IA: PROCHOT</p>
<span style="left:260px;top:147px;transform:matrix(1,.0005,0,1,0.9,0.34)">No</span>
<span style="left:285px;top:147px;transform:matrix(1,.0005,0,1,0.3,0.34)">No</span>
<span style="left:309px;top:147px;transform:matrix(1,.0005,0,1,0.8,0.34)">No</span>
<p style="left:200px;top:152px;transform:matrix(1,.0005,0,1,0.6,0.42)">IA: Thermal Event</p>
<span style="left:260px;top:152px;transform:matrix(1,.0005,0,1,0.9,0.42)">Yes</span>
<span style="left:285px;top:152px;transform:matrix(1,.0005,0,1,0.3,0.42)">No</span>
<span style="left:309px;top:152px;transform:matrix(1,.0005,0,1,0.8,0.42)">Yes</span>
<p style="left:200px;top:157px;transform:matrix(1,.0005,0,1,0.6,0.5)">IA: Residency State Regulation</p>
<span style="left:260px;top:157px;transform:matrix(1,.0005,0,1,0.9,0.5)">No</span>
<span style="left:285px;top:157px;transform:matrix(1,.0005,0,1,0.3,0.5)">No</span>
<span style="left:309px;top:157px;transform:matrix(1,.0005,0,1,0.8,0.5)">No</span>
<p style="left:200px;top:162px;transform:matrix(1,.0005,0,1,0.6,0.58)">IA: Running Average Thermal Limit</p>
<span style="left:260px;top:162px;transform:matrix(1,.0005,0,1,0.9,0.58)">No</span>
<span style="left:285px;top:162px;transform:matrix(1,.0005,0,1,0.3,0.58)">No</span>
<span style="left:309px;top:162px;transform:matrix(1,.0005,0,1,0.8,0.58)">No</span>
<p style="left:200px;top:167px;transform:matrix(1,.0005,0,1,0.6,0.66)">IA: VR Thermal Alert</p>
<span style="left:260px;top:167px;transform:matrix(1,.0005,0,1,0.9,0.66)">No</span>
<span style="left:285px;top:167px;transform:matrix(1,.0005,0,1,0.3,0.66)">No</span>
<span style="left:309px;top:167px;transform:matrix(1,.0005,0,1,0.8,0.66)">No</span>
<p style="left:200px;top:172px;transform:matrix(1,.0005,0,1,0.6,0.74)">IA: VR TDC</p>
<span style="left:260px;top:172px;transform:matrix(1,.0005,0,1,0.9,0.74)">No</span>
<span style="left:285px;top:172px;transform:matrix(1,.0005,0,1,0.3,0.74)">No</span>
<span style="left:309px;top:172px;transform:matrix(1,.0005,0,1,0.8,0.74)">No</span>
<p style="left:200px;top:177px;transform:matrix(1,.0005,0,1,0.6,0.82)">IA: Electrical Design Point/Other (ICCma...</p>
<span style="left:260px;top:177px;transform:matrix(1,.0005,0,1,0.9,0.82)">No</span>
<span style="left:285px;top:177px;transform:matrix(1,.0005,0,1,0.3,0.82)">No</span>
<span style="left:309px;top:177px;transform:matrix(1,.0005,0,1,0.8,0.82)">Yes</span>
<p style="left:200px;top:182px;transform:matrix(1,.0005,0,1,0.6,0.9)">IA: Package-Level RAPL/PBM PL1</p>
<span style="left:260px;top:182px;transform:matrix(1,.0005,0,1,0.9,0.9)">No</span>
<span style="left:285px;top:182px;transform:matrix(1,.0005,0,1,0.3,0.9)">No</span>
<span style="left:309px;top:182px;transform:matrix(1,.0005,0,1,0.8,0.9)">No</span>
<p style="left:200px;top:187px;transform:matrix(1,.0005,0,1,0.6,0.98)">IA: Package-Level RAPL/PBM PL2,PL3</p>
<span style="left:260px;top:187px;transform:matrix(1,.0005,0,1,0.9,0.98)">No</span>
<span style="left:285px;top:187px;transform:matrix(1,.0005,0,1,0.3,0.98)">No</span>
<span style="left:309px;top:187px;transform:matrix(1,.0005,0,1,0.8,0.98)">No</span>
<p style="left:200px;top:193px;transform:matrix(1,.0005,0,1,0.6,0.06)">IA: Max Turbo Limit</p>
<span style="left:260px;top:193px;transform:matrix(1,.0005,0,1,0.9,0.06)">No</span>
<span style="left:285px;top:193px;transform:matrix(1,.0005,0,1,0.3,0.06)">No</span>
<span style="left:309px;top:193px;transform:matrix(1,.0005,0,1,0.8,0.06)">Yes</span>
<p style="left:200px;top:198px;transform:matrix(1,.0005,0,1,0.6,0.14)">IA: Turbo Attenuation (MCT)</p>
<span style="left:260px;top:198px;transform:matrix(1,.0005,0,1,0.9,0.14)">No</span>
<span style="left:285px;top:198px;transform:matrix(1,.0005,0,1,0.3,0.14)">No</span>
<span style="left:309px;top:198px;transform:matrix(1,.0005,0,1,0.8,0.14)">No</span>
<p style="left:200px;top:203px;transform:matrix(1,.0005,0,1,0.6,0.22)">IA: Thermal Velocity Boost</p>
<span style="left:260px;top:203px;transform:matrix(1,.0005,0,1,0.9,0.22)">No</span>
<span style="left:285px;top:203px;transform:matrix(1,.0005,0,1,0.3,0.22)">No</span>
<span style="left:309px;top:203px;transform:matrix(1,.0005,0,1,0.8,0.22)">No</span>
<p style="left:200px;top:208px;transform:matrix(1,.0005,0,1,0.6,0.3)">GT Limit Reasons</p>
<span style="left:260px;top:208px;transform:matrix(1,.0005,0,1,0.9,0.3)">No</span>
<span style="left:285px;top:208px;transform:matrix(1,.0005,0,1,0.3,0.3)">No</span>
<span style="left:309px;top:208px;transform:matrix(1,.0005,0,1,0.8,0.3)">No</span>
<p style="left:200px;top:213px;transform:matrix(1,.0005,0,1,0.6,0.38)">Ring Limit Reasons</p>
<span style="left:260px;top:213px;transform:matrix(1,.0005,0,1,0.9,0.38)">Yes</span>
<span style="left:285px;top:213px;transform:matrix(1,.0005,0,1,0.3,0.38)">No</span>
<span style="left:309px;top:213px;transform:matrix(1,.0005,0,1,0.8,0.38)">Yes</span>
<b style="left:195px;top:223px;transform:matrix(1,.0005,0,1,0.3,0.54)">S.M.A.R.T.: SSSTC CL6-8D1024 (0024045W0116)</b>
<p style="left:195px;top:228px;transform:matrix(1,.0005,0,1,0.3,0.62)">Drive Temperature</p>
<span style="left:260px;top:228px;transform:matrix(1,.0005,0,1,0.9,0.62)">30 °C</span>
<span style="left:285px;top:228px;transform:matrix(1,.0005,0,1,0.3,0.62)">29 °C</span>
<span style="left:309px;top:228px;transform:matrix(1,.0005,0,1,0.8,0.62)">31 °C</span>
<span style="left:334px;top:228px;transform:matrix(1,.0005,0,1,0.3,0.62)">30 °C</span>
<p style="left:195px;top:233px;transform:matrix(1,.0005,0,1,0.3,0.7)">Drive Temperature 2</p>
<span style="left:260px;top:233px;transform:matrix(1,.0005,0,1,0.9,0.7)">30 °C</span>
<span style="left:285px;top:233px;transform:matrix(1,.0005,0,1,0.3,0.7)">29 °C</span>
<span style="left:309px;top:233px;transform:matrix(1,.0005,0,1,0.8,0.7)">31 °C</span>
<span style="left:334px;top:233px;transform:matrix(1,.0005,0,1,0.3,0.7)">30 °C</span>
<b style="left:195px;top:243px;transform:matrix(1,.0005,0,1,0.3,0.86)">GPU [#0]: NVIDIA GeForce RTX 4060 Laptop</b>
<p style="left:195px;top:248px;transform:matrix(1,.0005,0,1,0.3,0.94)">GPU Temperature</p>
<span style="left:260px;top:248px;transform:matrix(1,.0005,0,1,0.9,0.94)">57.1 °C</span>
<span style="left:285px;top:248px;transform:matrix(1,.0005,0,1,0.3,0.94)">44.7 °C</span>
<span style="left:309px;top:248px;transform:matrix(1,.0005,0,1,0.8,0.94)">59.3 °C</span>
<span style="left:334px;top:248px;transform:matrix(1,.0005,0,1,0.3,0.94)">56.8 °C</span>
<p style="left:195px;top:254px;transform:matrix(1,.0005,0,1,0.3,0.02)">GPU Memory Junction Temperature</p>
<span style="left:260px;top:254px;transform:matrix(1,.0005,0,1,0.9,0.02)">66.0 °C</span>
<span style="left:285px;top:254px;transform:matrix(1,.0005,0,1,0.3,0.02)">52.0 °C</span>
<span style="left:309px;top:254px;transform:matrix(1,.0005,0,1,0.8,0.02)">70.0 °C</span>
<span style="left:334px;top:254px;transform:matrix(1,.0005,0,1,0.3,0.02)">65.8 °C</span>
<p style="left:195px;top:259px;transform:matrix(1,.0005,0,1,0.3,0.1)">GPU Hot Spot Temperature</p>
<span style="left:260px;top:259px;transform:matrix(1,.0005,0,1,0.9,0.1)">64.9 °C</span>
<span style="left:285px;top:259px;transform:matrix(1,.0005,0,1,0.3,0.1)">51.1 °C</span>
<span style="left:309px;top:259px;transform:matrix(1,.0005,0,1,0.8,0.1)">66.7 °C</span>
<span style="left:334px;top:259px;transform:matrix(1,.0005,0,1,0.3,0.1)">64.6 °C</span>
<p style="left:195px;top:264px;transform:matrix(1,.0005,0,1,0.3,0.18)">GPU Thermal Limit</p>
<span style="left:260px;top:264px;transform:matrix(1,.0005,0,1,0.9,0.18)">87.0 °C</span>
<span style="left:285px;top:264px;transform:matrix(1,.0005,0,1,0.3,0.18)">87.0 °C</span>
<span style="left:309px;top:264px;transform:matrix(1,.0005,0,1,0.8,0.18)">87.0 °C</span>
<span style="left:334px;top:264px;transform:matrix(1,.0005,0,1,0.3,0.18)">87.0 °C</span>
<p style="left:195px;top:269px;transform:matrix(1,.0005,0,1,0.3,0.26)">GPU Core Voltage</p>
<span style="left:260px;top:269px;transform:matrix(1,.0005,0,1,0.9,0.26)">0.625 V</span>
<span style="left:285px;top:269px;transform:matrix(1,.0005,0,1,0.3,0.26)">0.625 V</span>
<span style="left:309px;top:269px;transform:matrix(1,.0005,0,1,0.8,0.26)">0.870 V</span>
<span style="left:334px;top:269px;transform:matrix(1,.0005,0,1,0.3,0.26)">0.626 V</span>
<p style="left:200px;top:274px;transform:matrix(1,.0005,0,1,0.6,0.34)">GPU Rail Voltages</p>
<span style="left:285px;top:274px;transform:matrix(1,.0005,0,1,0.3,0.34)">19.250 V</span>
<span style="left:309px;top:274px;transform:matrix(1,.0005,0,1,0.8,0.34)">19.698 V</span>
<p style="left:200px;top:279px;transform:matrix(1,.0005,0,1,0.6,0.42)">GPU NVVDD Input Voltage</p>
<span style="left:260px;top:279px;transform:matrix(1,.0005,0,1,0.9,0.42)">19.469 V</span>
<span style="left:285px;top:279px;transform:matrix(1,.0005,0,1,0.3,0.42)">19.254 V</span>
<span style="left:309px;top:279px;transform:matrix(1,.0005,0,1,0.8,0.42)">19.597 V</span>
<span style="left:334px;top:279px;transform:matrix(1,.0005,0,1,0.3,0.42)">19.479 V</span>
<p style="left:200px;top:284px;transform:matrix(1,.0005,0,1,0.6,0.5)">GPU 16-pin HVPWR Voltage</p>
<span style="left:260px;top:284px;transform:matrix(1,.0005,0,1,0.9,0.5)">19.528 V</span>
<span style="left:285px;top:284px;transform:matrix(1,.0005,0,1,0.3,0.5)">19.327 V</span>
<span style="left:309px;top:284px;transform:matrix(1,.0005,0,1,0.8,0.5)">19.648 V</span>
<span style="left:334px;top:284px;transform:matrix(1,.0005,0,1,0.3,0.5)">19.511 V</span>
<p style="left:200px;top:289px;transform:matrix(1,.0005,0,1,0.6,0.58)">GPU NVVDD Output Voltage</p>
<span style="left:260px;top:289px;transform:matrix(1,.0005,0,1,0.9,0.58)">19.468 V</span>
<span style="left:285px;top:289px;transform:matrix(1,.0005,0,1,0.3,0.58)">19.252 V</span>
<span style="left:309px;top:289px;transform:matrix(1,.0005,0,1,0.8,0.58)">19.588 V</span>
<span style="left:334px;top:289px;transform:matrix(1,.0005,0,1,0.3,0.58)">19.479 V</span>
<p style="left:195px;top:294px;transform:matrix(1,.0005,0,1,0.3,0.66)">GPU Power</p>
<span style="left:260px;top:294px;transform:matrix(1,.0005,0,1,0.9,0.66)">5.144 W</span>
<span style="left:285px;top:294px;transform:matrix(1,.0005,0,1,0.3,0.66)">3.191 W</span>
<span style="left:309px;top:294px;transform:matrix(1,.0005,0,1,0.8,0.66)">19.499 W</span>
<span style="left:334px;top:294px;transform:matrix(1,.0005,0,1,0.3,0.66)">4.713 W</span>
<p style="left:200px;top:299px;transform:matrix(1,.0005,0,1,0.6,0.74)">GPU Rail Powers</p>
<span style="left:285px;top:299px;transform:matrix(1,.0005,0,1,0.3,0.74)">1.000 W</span>
<span style="left:309px;top:299px;transform:matrix(1,.0005,0,1,0.8,0.74)">16.494 W</span>
<p style="left:195px;top:304px;transform:matrix(1,.0005,0,1,0.3,0.82)">GPU Clock</p>
<span style="left:260px;top:304px;transform:matrix(1,.0005,0,1,0.9,0.82)">210.0 MHz</span>
<span style="left:285px;top:304px;transform:matrix(1,.0005,0,1,0.3,0.82)">210.0 MHz</span>
<span style="left:309px;top:304px;transform:matrix(1,.0005,0,1,0.8,0.82)">2,100.0 MHz</span>
<span style="left:334px;top:304px;transform:matrix(1,.0005,0,1,0.3,0.82)">211.3 MHz</span>
<p style="left:195px;top:309px;transform:matrix(1,.0005,0,1,0.3,0.9)">GPU Memory Clock</p>
<span style="left:260px;top:309px;transform:matrix(1,.0005,0,1,0.9,0.9)">101.3 MHz</span>
<span style="left:285px;top:309px;transform:matrix(1,.0005,0,1,0.3,0.9)">101.3 MHz</span>
<span style="left:309px;top:309px;transform:matrix(1,.0005,0,1,0.8,0.9)">2,000.2 MHz</span>
<span style="left:334px;top:309px;transform:matrix(1,.0005,0,1,0.3,0.9)">111.2 MHz</span>
<p style="left:195px;top:314px;transform:matrix(1,.0005,0,1,0.3,0.98)">GPU Video Clock</p>
<span style="left:260px;top:314px;transform:matrix(1,.0005,0,1,0.9,0.98)">765.0 MHz</span>
<span style="left:285px;top:314px;transform:matrix(1,.0005,0,1,0.3,0.98)">765.0 MHz</span>
<span style="left:309px;top:314px;transform:matrix(1,.0005,0,1,0.8,0.98)">1,860.0 MHz</span>
<span style="left:334px;top:314px;transform:matrix(1,.0005,0,1,0.3,0.98)">770.7 MHz</span>
<p style="left:195px;top:320px;transform:matrix(1,.0005,0,1,0.3,0.06)">GPU Effective Clock</p>
<span style="left:260px;top:320px;transform:matrix(1,.0005,0,1,0.9,0.06)">94.8 MHz</span>
<span style="left:285px;top:320px;transform:matrix(1,.0005,0,1,0.3,0.06)">50.0 MHz</span>
<span style="left:309px;top:320px;transform:matrix(1,.0005,0,1,0.8,0.06)">2,100.0 MHz</span>
<span style="left:334px;top:320px;transform:matrix(1,.0005,0,1,0.3,0.06)">124.3 MHz</span>
<p style="left:195px;top:325px;transform:matrix(1,.0005,0,1,0.3,0.14)">GPU Crossbar Clock</p>
<span style="left:260px;top:325px;transform:matrix(1,.0005,0,1,0.9,0.14)">825.0 MHz</span>
<span style="left:285px;top:325px;transform:matrix(1,.0005,0,1,0.3,0.14)">825.0 MHz</span>
<span style="left:309px;top:325px;transform:matrix(1,.0005,0,1,0.8,0.14)">1,875.0 MHz</span>
<span style="left:334px;top:325px;transform:matrix(1,.0005,0,1,0.3,0.14)">830.3 MHz</span>
<p style="left:200px;top:330px;transform:matrix(1,.0005,0,1,0.6,0.22)">GPU D3D Usages</p>
<span style="left:285px;top:330px;transform:matrix(1,.0005,0,1,0.3,0.22)">0.0 %</span>
<span style="left:309px;top:330px;transform:matrix(1,.0005,0,1,0.8,0.22)">22.1 %</span>
<p style="left:200px;top:335px;transform:matrix(1,.0005,0,1,0.6,0.3)">GPU Performance Limiters</p>
<span style="left:260px;top:335px;transform:matrix(1,.0005,0,1,0.9,0.3)">Yes</span>
<span style="left:285px;top:335px;transform:matrix(1,.0005,0,1,0.3,0.3)">No</span>
<span style="left:309px;top:335px;transform:matrix(1,.0005,0,1,0.8,0.3)">Yes</span>
<span style="left:334px;top:335px;transform:matrix(1,.0005,0,1,0.3,0.3)">Yes</span>
<p style="left:195px;top:340px;transform:matrix(1,.0005,0,1,0.3,0.38)">GPU Memory Available</p>
<span style="left:260px;top:340px;transform:matrix(1,.0005,0,1,0.9,0.38)">7,137 MB</span>
<span style="left:285px;top:340px;transform:matrix(1,.0005,0,1,0.3,0.38)">7,172 MB</span>
<span style="left:309px;top:340px;transform:matrix(1,.0005,0,1,0.8,0.38)">7,421 MB</span>
<span style="left:334px;top:340px;transform:matrix(1,.0005,0,1,0.3,0.38)">7,411 MB</span>
<p style="left:195px;top:345px;transform:matrix(1,.0005,0,1,0.3,0.46)">GPU Memory Allocated</p>
<span style="left:260px;top:345px;transform:matrix(1,.0005,0,1,0.9,0.46)">651 MB</span>
<span style="left:285px;top:345px;transform:matrix(1,.0005,0,1,0.3,0.46)">367 MB</span>
<span style="left:309px;top:345px;transform:matrix(1,.0005,0,1,0.8,0.46)">615 MB</span>
<span style="left:334px;top:345px;transform:matrix(1,.0005,0,1,0.3,0.46)">377 MB</span>
<p style="left:195px;top:350px;transform:matrix(1,.0005,0,1,0.3,0.54)">GPU D3D Memory Dedicated</p>
<span style="left:260px;top:350px;transform:matrix(1,.0005,0,1,0.9,0.54)">439 MB</span>
<span style="left:285px;top:350px;transform:matrix(1,.0005,0,1,0.3,0.54)">356 MB</span>
<span style="left:309px;top:350px;transform:matrix(1,.0005,0,1,0.8,0.54)">795 MB</span>
<span style="left:334px;top:350px;transform:matrix(1,.0005,0,1,0.3,0.54)">366 MB</span>
<p style="left:195px;top:355px;transform:matrix(1,.0005,0,1,0.3,0.62)">GPU D3D Memory Dynamic</p>
<span style="left:260px;top:355px;transform:matrix(1,.0005,0,1,0.9,0.62)">111 MB</span>
<span style="left:285px;top:355px;transform:matrix(1,.0005,0,1,0.3,0.62)">105 MB</span>
<span style="left:309px;top:355px;transform:matrix(1,.0005,0,1,0.8,0.62)">114 MB</span>
<span style="left:334px;top:355px;transform:matrix(1,.0005,0,1,0.3,0.62)">107 MB</span>
<p style="left:195px;top:360px;transform:matrix(1,.0005,0,1,0.3,0.7)">PCIe Link Speed</p>
<span style="left:260px;top:360px;transform:matrix(1,.0005,0,1,0.9,0.7)">2.5 GT/s</span>
<span style="left:285px;top:360px;transform:matrix(1,.0005,0,1,0.3,0.7)">2.5 GT/s</span>
<span style="left:309px;top:360px;transform:matrix(1,.0005,0,1,0.8,0.7)">16.0 GT/s</span>
<span style="left:334px;top:360px;transform:matrix(1,.0005,0,1,0.3,0.7)">2.6 GT/s</span>
<p class="hd" style="left:0px;top:10px;transform:matrix(1,.0005,0,1,0.6,0.3)">Sensor</p>
<p class="hd" style="left:185px;top:10px;transform:matrix(1,.0005,0,1,0.2,0.3)">Sensor</p>
<span class="hd" style="left:70px;top:10px;transform:matrix(1,.0005,0,1,0,0.3)">Current</span>
<span class="hd" style="left:94px;top:10px;transform:matrix(1,.0005,0,1,0.8,0.3)">Minimum</span>
<span class="hd" style="left:118px;top:10px;transform:matrix(1,.0005,0,1,0.9,0.3)">Maximum</span>
<span class="hd" style="left:143px;top:10px;transform:matrix(1,.0005,0,1,0.5,0.3)">Average</span>
<span class="hd" style="left:260px;top:10px;transform:matrix(1,.0005,0,1,0.9,0.3)">Current</span>
<span class="hd" style="left:285px;top:10px;transform:matrix(1,.0005,0,1,0.3,0.3)">Minimum</span>
<span class="hd" style="left:309px;top:10px;transform:matrix(1,.0005,0,1,0.8,0.3)">Maximum</span>
<span class="hd" style="left:334px;top:10px;transform:matrix(1,.0005,0,1,0.3,0.3)">Average</span>
<p class="tt" style="left:6px;top:3px;transform:matrix(1,.0005,0,1,0.8,0)">HWiNFO® 64 v8.06-5500 Sensor Status [135 values hidden]</p>
<p class="tm" style="left:296px;top:411px;transform:matrix(1,.0005,0,1,0.8,0.3)">0:20:00</p>
<p class="wt" style="left:378px;top:3px;transform:matrix(1,.0005,0,1,0.1,0)">Core Effective Clocks</p>
<p class="gl" style="left:754px;top:9px;transform:matrix(1,.0005,0,1,0.9,0.8)">5000.0</p>
<p class="gl" style="left:754px;top:31px;transform:matrix(1,.0005,0,1,0.9,0.8)">3,584.9 MHz</p>
<p class="bt" style="left:754px;top:40px;transform:matrix(1,.0005,0,1,0.7,0.85)">Auto Fit</p>
<p class="bt" style="left:754px;top:48px;transform:matrix(1,.0005,0,1,0.7,0.15)">Reset</p>
<p class="gl" style="left:754px;top:56px;transform:matrix(1,.0005,0,1,0.9,0.5)">0.0</p>
<p class="wt" style="left:378px;top:66px;transform:matrix(1,.0005,0,1,0.1,0.9)">E-core 6 T0 Effective Clock</p>
<p class="gl" style="left:754px;top:73px;transform:matrix(1,.0005,0,1,0.9,0.7)">5000.0</p>
<p class="gl" style="left:754px;top:95px;transform:matrix(1,.0005,0,1,0.9,0.7)">3,296.0 MHz</p>
<p class="bt" style="left:754px;top:104px;transform:matrix(1,.0005,0,1,0.7,0.75)">Auto Fit</p>
<p class="bt" style="left:754px;top:112px;transform:matrix(1,.0005,0,1,0.7,0.05)">Reset</p>
<p class="gl" style="left:754px;top:120px;transform:matrix(1,.0005,0,1,0.9,0.4)">0.0</p>
<p class="wt" style="left:378px;top:130px;transform:matrix(1,.0005,0,1,0.1,0.7)">CPU Package</p>
<p class="gl" style="left:754px;top:137px;transform:matrix(1,.0005,0,1,0.9,0.5)">110</p>
<p class="gl" style="left:754px;top:159px;transform:matrix(1,.0005,0,1,0.9,0.5)">98 °C</p>
<p class="bt" style="left:754px;top:168px;transform:matrix(1,.0005,0,1,0.7,0.55)">Auto Fit</p>
<p class="bt" style="left:754px;top:175px;transform:matrix(1,.0005,0,1,0.7,0.85)">Reset</p>
<p class="gl" style="left:754px;top:184px;transform:matrix(1,.0005,0,1,0.9,0.2)">0</p>
<p class="wt" style="left:378px;top:194px;transform:matrix(1,.0005,0,1,0.1,0.4)">CPU Package Power</p>
<p class="gl" style="left:754px;top:201px;transform:matrix(1,.0005,0,1,0.9,0.2)">150.000</p>
<p class="gl" style="left:754px;top:223px;transform:matrix(1,.0005,0,1,0.9,0.2)">95.074 W</p>
<p class="bt" style="left:754px;top:232px;transform:matrix(1,.0005,0,1,0.7,0.25)">Auto Fit</p>
<p class="bt" style="left:754px;top:239px;transform:matrix(1,.0005,0,1,0.7,0.55)">Reset</p>
<p class="gl" style="left:754px;top:247px;transform:matrix(1,.0005,0,1,0.9,0.9)">0.000</p>
<p class="wt" style="left:378px;top:258px;transform:matrix(1,.0005,0,1,0.1,0.7)">GPU Clock</p>
<p class="gl" style="left:754px;top:265px;transform:matrix(1,.0005,0,1,0.9,0.8)">3000.0</p>
<p class="gl" style="left:754px;top:279px;transform:matrix(1,.0005,0,1,0.9,0.8)">210.0 MHz</p>
<p class="bt" style="left:754px;top:288px;transform:matrix(1,.0005,0,1,0.7,0.85)">Auto Fit</p>
<p class="bt" style="left:754px;top:296px;transform:matrix(1,.0005,0,1,0.7,0.35)">Reset</p>
<p class="gl" style="left:754px;top:304px;transform:matrix(1,.0005,0,1,0.9,0.9)">0.0</p>
<p class="wt" style="left:378px;top:314px;transform:matrix(1,.0005,0,1,0.1,0.7)">GPU Temperature</p>
<p class="gl" style="left:754px;top:321px;transform:matrix(1,.0005,0,1,0.9,0.8)">100.0</p>
<p class="gl" style="left:754px;top:335px;transform:matrix(1,.0005,0,1,0.9,0.8)">57.1 °C</p>
<p class="bt" style="left:754px;top:344px;transform:matrix(1,.0005,0,1,0.7,0.85)">Auto Fit</p>
<p class="bt" style="left:754px;top:352px;transform:matrix(1,.0005,0,1,0.7,0.35)">Reset</p>
<p class="gl" style="left:754px;top:360px;transform:matrix(1,.0005,0,1,0.9,0.9)">0.0</p>
<p class="wt" style="left:378px;top:370px;transform:matrix(1,.0005,0,1,0.1,0.8)">GPU Power</p>
<p class="gl" style="left:754px;top:377px;transform:matrix(1,.0005,0,1,0.9,0.9)">200.000</p>
<p class="gl" style="left:754px;top:391px;transform:matrix(1,.0005,0,1,0.9,0.9)">5.248 W</p>
<p class="bt" style="left:754px;top:400px;transform:matrix(1,.0005,0,1,0.7,0.95)">Auto Fit</p>
<p class="bt" style="left:754px;top:408px;transform:matrix(1,.0005,0,1,0.7,0.45)">Reset</p>
<p class="gl" style="left:754px;top:417px;transform:matrix(1,.0005,0,1,0.9,0)">0.000</p>
</div>
</body></html>
